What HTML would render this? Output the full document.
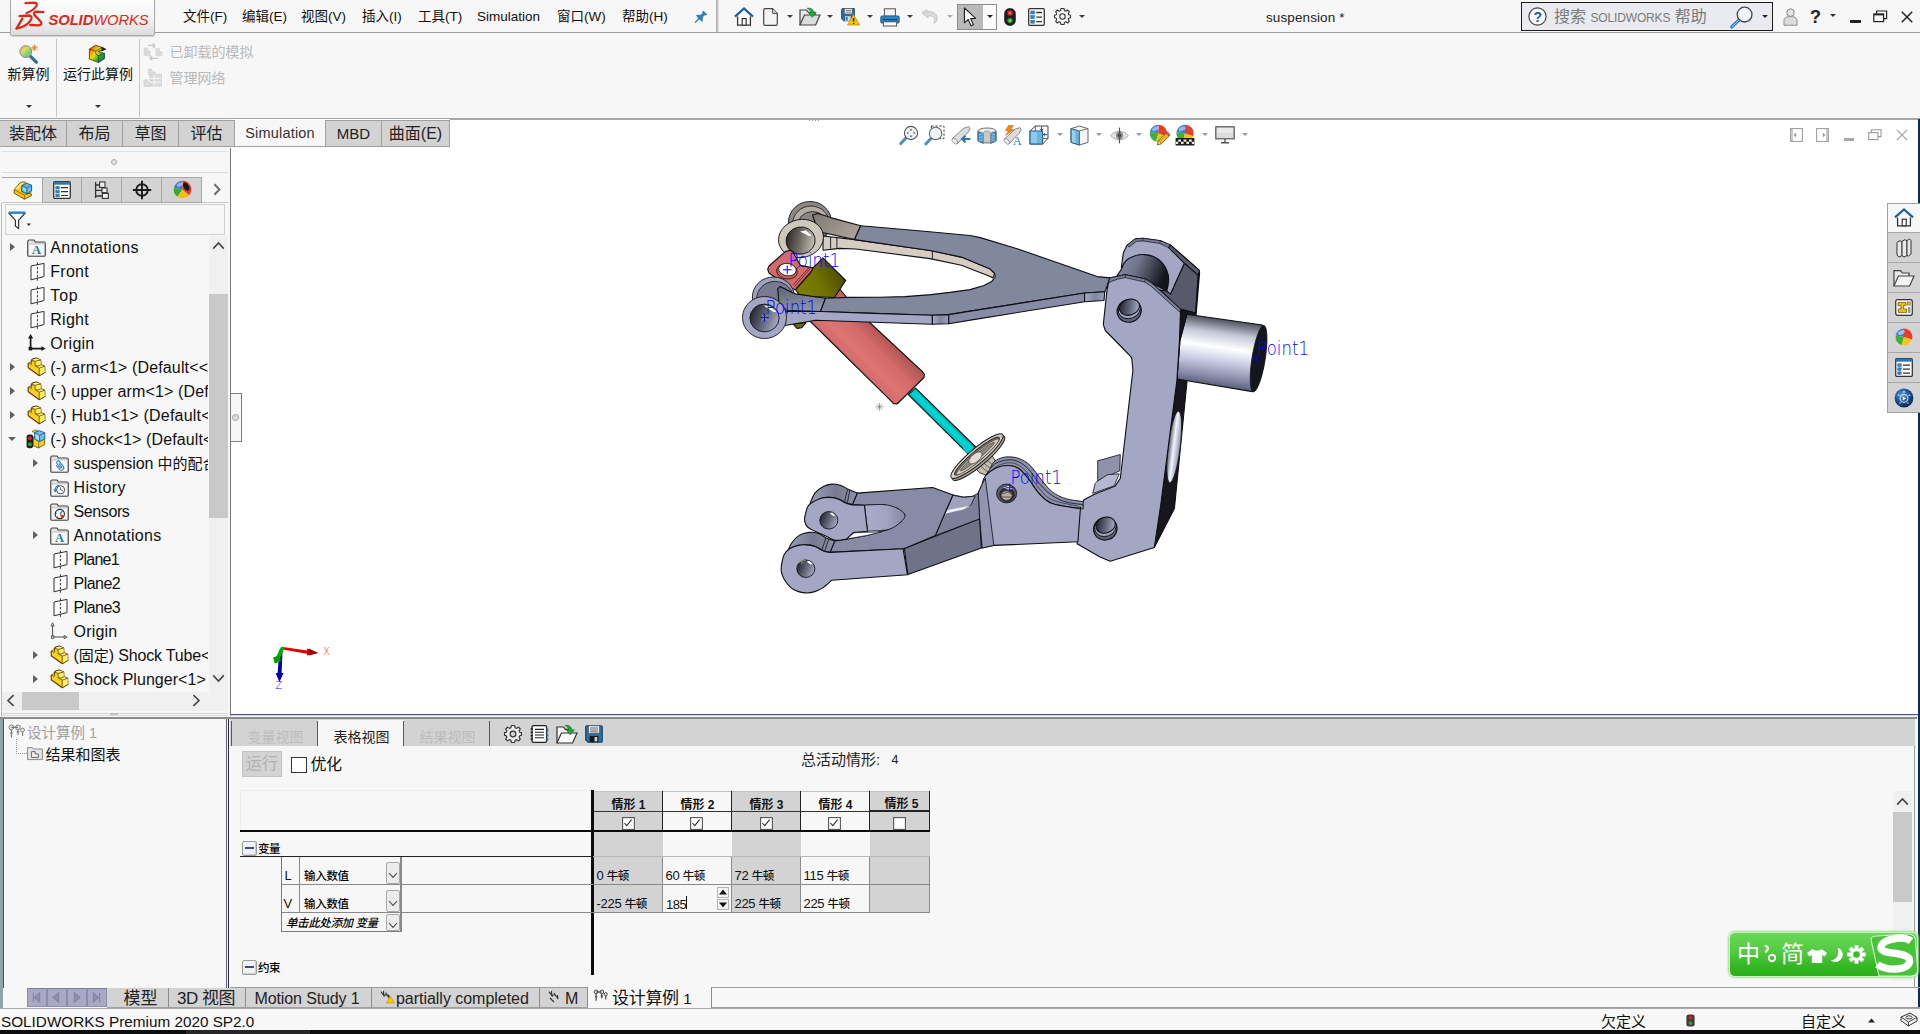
<!DOCTYPE html>
<html lang="zh-CN">
<head>
<meta charset="utf-8">
<title>suspension * - SOLIDWORKS Premium 2020 SP2.0</title>
<style>
*{box-sizing:border-box;margin:0;padding:0}
html,body{width:1920px;height:1034px;overflow:hidden;background:#f7f7f7}
body{font-family:"Liberation Sans","Noto Sans CJK SC",sans-serif;color:#1a1a1a;font-size:13px}
#root{position:relative;width:1920px;height:1034px;overflow:hidden;background:#f7f7f7}
.a{position:absolute;white-space:nowrap}
.t{position:absolute;white-space:nowrap;line-height:1}
.hl{position:absolute;height:1px;background:#a0a0a0}
.vl{position:absolute;width:1px;background:#a0a0a0}
svg{position:absolute;overflow:visible}
/* menu */
.menu{font-size:13.5px;top:10px;color:#111}
/* cmd tabs */
.ctab{z-index:2;position:absolute;top:120px;height:27px;background:#d3d3d3;border:1px solid #a0a0a0;border-left:none;font-size:16px;line-height:25px;text-align:center;color:#222}
.ctab.act{background:#f7f7f7;border-bottom-color:#f7f7f7;border-top-color:#f7f7f7;color:#333}
/* tree */
.tr{position:absolute;font-size:16px;line-height:24px;height:24px;white-space:nowrap;color:#111}
.arr{position:absolute;width:0;height:0;border-left:5px solid #606060;border-top:4px solid transparent;border-bottom:4px solid transparent}
.arrd{position:absolute;width:0;height:0;border-top:3.5px solid #3c3c3c;border-left:3px solid transparent;border-right:3px solid transparent;margin-left:1.5px;margin-top:1px}
</style>
</head>
<body>
<div id="root">
<!--TOP-->
<!-- ===== title / menu bar ===== -->
<div class="hl" style="left:0;top:32px;width:1920px;background:#9a9a9a"></div>
<div class="a" style="left:10px;top:-2px;width:145px;height:38px;border:1px solid #a8a8a8;border-radius:2px;background:linear-gradient(180deg,#fdfdfd 0%,#f4f4f4 55%,#dcdcdc 100%);box-shadow:0 1px 1px rgba(0,0,0,.15)"></div>
<svg style="left:10px;top:0" width="40" height="36" viewBox="0 0 40 36"><g fill="none" stroke="#da291c" stroke-width="2.3" stroke-linecap="round" stroke-linejoin="round"><path d="M15.6 3.2 L24.4 2.6 Q27.8 3 26.4 6 Q23.6 10.4 16.6 13"/><path d="M9.6 16.1 L18.8 15.5 Q22.6 15.8 21.2 19.2 Q17.6 26.4 6.4 28.6 L12.4 18.6"/><path d="M33.4 12.1 L27 11.6 Q23 11.8 24.2 14.6 L31 22 Q32.4 25.2 28.6 25.3 L20.2 25"/></g></svg>
<div class="t" style="left:48.5px;top:12.6px;font-size:14.8px;font-weight:bold;font-style:italic;color:#da291c;letter-spacing:-.1px">SOLID<span style="font-weight:normal;letter-spacing:-.15px">WORKS</span></div>
<div class="t menu" style="left:183px">文件(F)</div>
<div class="t menu" style="left:242px">编辑(E)</div>
<div class="t menu" style="left:301px">视图(V)</div>
<div class="t menu" style="left:362px">插入(I)</div>
<div class="t menu" style="left:418px">工具(T)</div>
<div class="t menu" style="left:477px">Simulation</div>
<div class="t menu" style="left:557px">窗口(W)</div>
<div class="t menu" style="left:622px">帮助(H)</div>
<svg style="left:685px;top:4px" width="30" height="26" viewBox="0 0 30 26"><path d="M17.6 7 L18.4 6.8 L22 10.2 L21.8 11 L19.4 11.4 L18 13 L17.6 17.8 L17 18 L15.4 16.2 L14 15.6 L10.6 19 L9.8 18.6 L10 17.6 L13.2 14.4 L12.6 13.4 L11 11.6 L11.2 11 L15.8 10.8 L17.2 9.4 Z" fill="#2f86b2"/></svg>
<div class="vl" style="left:716px;top:0;height:32px;background:linear-gradient(90deg,#a4a4a4,#c8c8c8 50%,#e4e4e4);width:3px"></div>
<!-- quick toolbar -->
<svg style="left:734px;top:7px" width="20" height="20" viewBox="0 0 20 20"><path d="M1 9.6 L10 1.4 L19 9.6" fill="none" stroke="#1f5f94" stroke-width="2.2"/><path d="M3.6 9.5 V18.2 H16.4 V9.5" fill="#fff" stroke="#333" stroke-width="1.3"/><rect x="8.2" y="11.6" width="4" height="6.6" fill="#fff" stroke="#333" stroke-width="1.2"/></svg>
<svg style="left:763px;top:8px" width="15" height="18" viewBox="0 0 15 18"><path d="M0.7 2 Q0.7 0.7 2 0.7 H9.6 L14.3 5.4 V16 Q14.3 17.3 13 17.3 H2 Q0.7 17.3 0.7 16 Z" fill="#f4f4f4" stroke="#444" stroke-width="1.2"/><path d="M9.6 0.7 V5.4 H14.3" fill="#ddd" stroke="#444" stroke-width="1"/></svg>
<div class="arrd" style="left:785.5px;top:14px"></div>
<svg style="left:799px;top:7px" width="22" height="19" viewBox="0 0 22 19"><path d="M1 18 V3 H7.6 L9.4 5.4 H16 V8" fill="#e9e9e9" stroke="#444" stroke-width="1.2"/><path d="M1 18 L5.4 8 H21 L16.6 18 Z" fill="#dcdcdc" stroke="#444" stroke-width="1.2"/><path d="M8 1.2 C12 0.6 14.6 2.6 14.8 5.6 L17.4 5.6 L13.2 10.4 L9.2 5.6 L11.8 5.6 C11.6 3.8 10.4 2.4 8 1.2 Z" fill="#1fa83a" stroke="#0e7a22" stroke-width=".5"/></svg>
<div class="arrd" style="left:825.5px;top:14px"></div>
<svg style="left:841px;top:8px" width="19" height="18" viewBox="0 0 19 18"><path d="M0.6 1.8 Q0.6 0.6 1.8 0.6 H13.4 V12.8 H2.6 L0.6 10.8 Z" fill="#2a6ea6" stroke="#1d4f7a" stroke-width="1"/><rect x="3.4" y="0.6" width="7.8" height="5.4" fill="#e8e8e8" stroke="#555" stroke-width=".6"/><path d="M5 2.4 H10 M5 4.2 H10" stroke="#666" stroke-width=".8"/><rect x="4" y="8.2" width="5.6" height="4.6" fill="#d8d8d8"/><rect x="4.8" y="9" width="1.8" height="3.2" fill="#2a6ea6"/><path d="M12.6 6.6 L18.6 17 H6.6 Z" fill="#f8c800" stroke="#c98a00" stroke-width=".8"/><path d="M12.6 10 V13.6 M12.6 14.8 V16" stroke="#222" stroke-width="1.5"/></svg>
<div class="arrd" style="left:865.5px;top:14px"></div>
<svg style="left:880px;top:8px" width="20" height="19" viewBox="0 0 20 19"><rect x="4.4" y="0.8" width="11" height="7.4" fill="#f2f2f2" stroke="#555" stroke-width="1"/><rect x="0.8" y="8" width="18.4" height="7" rx="1.2" fill="#2d87c6" stroke="#1c5f92" stroke-width="1"/><path d="M2.6 11.6 H17.4" stroke="#0e4a78" stroke-width="1.4"/><rect x="3.4" y="13.8" width="13.2" height="4.2" fill="#fafafa" stroke="#555" stroke-width="1"/></svg>
<div class="arrd" style="left:905px;top:14px"></div>
<svg style="left:921px;top:9px" width="18" height="15" viewBox="0 0 18 15"><path d="M1 3.8 L5.6 0.8 L6 2.8 C11.4 1.6 16.4 4.6 16.2 9.6 C16.1 12 15 13.6 12.6 14.4 C14.2 12.6 14.2 10.2 12.8 8.6 C11.4 7 9 6.4 6.8 7 L7.2 9 Z" fill="#d9d9d9" stroke="#bdbdbd" stroke-width=".8"/></svg>
<div class="arrd" style="left:945px;top:14px;border-top-color:#b0b0b0"></div>
<div class="a" style="left:957px;top:4px;width:40px;height:26px;border:1px solid #8c8c8c;background:#fbfbfb"></div>
<div class="a" style="left:958px;top:5px;width:25px;height:24px;background:#b9b9b9"></div>
<svg style="left:963px;top:7px" width="15" height="20" viewBox="0 0 15 20"><path d="M1.4 0.8 L1.4 15.8 L5.2 12.4 L8 18.8 L10.4 17.8 L7.6 11.6 L12.6 11.4 Z" fill="#fff" stroke="#222" stroke-width="1.1" stroke-linejoin="round"/></svg>
<div class="arrd" style="left:985.5px;top:14px;border-top-color:#222"></div>
<svg style="left:1004px;top:8px" width="12" height="18" viewBox="0 0 12 18"><rect x="0.6" y="0.6" width="10.8" height="16.8" rx="5" fill="#1e1e1e" stroke="#000" stroke-width=".6"/><circle cx="6" cy="5" r="2.7" fill="#e0201a"/><circle cx="6" cy="12.6" r="2.7" fill="#1fa02c"/><path d="M4.6 5 H7.4 M6 3.6 V6.4" stroke="#ff9a90" stroke-width=".7"/><path d="M4.6 12.6 H7.4 M6 11.2 V14" stroke="#9af09a" stroke-width=".7"/></svg>
<svg style="left:1028px;top:8px" width="17" height="18" viewBox="0 0 17 18"><rect x="0.7" y="0.7" width="15.6" height="16.6" rx="1" fill="#fdfdfd" stroke="#333" stroke-width="1.3"/><rect x="2.8" y="3" width="3.6" height="3" fill="#2d87c6" stroke="#1c5f92" stroke-width=".5"/><rect x="2.8" y="7.6" width="3.6" height="3" fill="#2d87c6" stroke="#1c5f92" stroke-width=".5"/><rect x="2.8" y="12.2" width="3.6" height="3" fill="#2d87c6" stroke="#1c5f92" stroke-width=".5"/><path d="M8.2 4.5 H14 M8.2 9.1 H14 M8.2 13.7 H14" stroke="#333" stroke-width="1.3"/></svg>
<svg style="left:1054px;top:8px" width="17" height="17" viewBox="0 0 17 17"><g transform="translate(8.5 8.5)"><path id="gear" d="M-1.5 -8 H1.5 L2 -5.9 L3.4 -5.3 L5.2 -6.5 L6.9 -4.7 L5.8 -3 L6.3 -1.7 L8 -1.3 V1.3 L6.3 1.7 L5.8 3 L6.9 4.7 L5.2 6.5 L3.4 5.3 L2 5.9 L1.5 8 H-1.5 L-2 5.9 L-3.4 5.3 L-5.2 6.5 L-6.9 4.7 L-5.8 3 L-6.3 1.7 L-8 1.3 V-1.3 L-6.3 -1.7 L-5.8 -3 L-6.9 -4.7 L-5.2 -6.5 L-3.4 -5.3 L-2 -5.9 Z" fill="#f7f7f7" stroke="#333" stroke-width="1.1" stroke-linejoin="round"/><circle r="2.7" fill="#f7f7f7" stroke="#333" stroke-width="1.1"/></g></svg>
<div class="arrd" style="left:1077.5px;top:14px"></div>
<div class="t" style="left:1266px;top:10.5px;font-size:13.5px;color:#222;letter-spacing:.1px">suspension *</div>
<!-- search box -->
<div class="a" style="left:1521px;top:2px;width:252px;height:29px;border:1.5px solid #1c1c1c;background:#e9ebf1"></div>
<svg style="left:1528px;top:7px" width="19" height="19" viewBox="0 0 19 19"><circle cx="9.5" cy="9.5" r="8.6" fill="#fafafa" stroke="#444" stroke-width="1.2"/></svg>
<div class="t" style="left:1533.5px;top:9.5px;font-size:14px;font-weight:bold;color:#1b5d94">?</div>
<div class="t" style="left:1554px;top:9px;font-size:16px;color:#7a7a7a">搜索 <span style="font-size:12px;letter-spacing:-.15px">SOLIDWORKS</span> 帮助</div>
<svg style="left:1730px;top:6px" width="24" height="23" viewBox="0 0 24 23"><path d="M9.6 13.4 L1.6 21" stroke="#2f7fb8" stroke-width="3.2" stroke-linecap="round"/><path d="M9.6 13.4 L1.6 21" stroke="#9fd0f0" stroke-width="1" stroke-linecap="round"/><circle cx="14.6" cy="8.6" r="7.4" fill="#f1f3f8" stroke="#444" stroke-width="1.3"/></svg>
<div class="arrd" style="left:1760px;top:14px;border-top-color:#222"></div>
<svg style="left:1783px;top:8px" width="15" height="18" viewBox="0 0 15 18"><circle cx="7.5" cy="4.6" r="3.8" fill="#e4e4e4" stroke="#8a8a8a" stroke-width="1"/><path d="M1 17.2 V12.6 C1 9.6 3.6 8.6 7.5 8.6 C11.4 8.6 14 9.6 14 12.6 V17.2 Z" fill="#dcdcdc" stroke="#8a8a8a" stroke-width="1"/></svg>
<div class="t" style="left:1810px;top:7.5px;font-size:18px;font-weight:bold;color:#222">?</div>
<div class="arrd" style="left:1830px;top:13.5px;margin:0;border-top-color:#333"></div>
<div class="a" style="left:1850px;top:19.5px;width:11px;height:3.5px;background:#222"></div>
<svg style="left:1873px;top:10px" width="15" height="13" viewBox="0 0 15 13"><path d="M3.6 3.6 V1 H13.6 V8.6 H10.6" fill="none" stroke="#222" stroke-width="1.2"/><rect x="0.8" y="4" width="9.8" height="7.6" fill="#f7f7f7" stroke="#222" stroke-width="1.2"/><path d="M0.8 4.6 H10.6" stroke="#222" stroke-width="1.6"/></svg>
<svg style="left:1901px;top:11px" width="12" height="12" viewBox="0 0 12 12"><path d="M0.8 0.8 L11.2 11.2 M11.2 0.8 L0.8 11.2" stroke="#222" stroke-width="1.5"/></svg>
<!--CMD-->
<!-- ===== command manager ===== -->
<svg style="left:19px;top:44px" width="20" height="20" viewBox="0 0 20 20"><defs><linearGradient id="rb1" x1="0" y1="0" x2="1" y2="1"><stop offset="0" stop-color="#f08a7a"/><stop offset=".35" stop-color="#e8d860"/><stop offset=".65" stop-color="#7fd070"/><stop offset="1" stop-color="#70a8e0"/></linearGradient></defs><path d="M10.2 11.2 L17.4 18.2" stroke="#2f6f96" stroke-width="3.2" stroke-linecap="round"/><circle cx="6.8" cy="7.6" r="5.9" fill="url(#rb1)" stroke="#8a8a8a" stroke-width="1"/><path d="M15.4 0.6 V7 M12.2 3.8 H18.6 M13.1 1.5 L17.7 6.1 M17.7 1.5 L13.1 6.1" stroke="#e07a10" stroke-width=".9"/></svg>
<div class="t" style="left:7.5px;top:67px;font-size:14px;color:#111">新算例</div>
<div class="arrd" style="left:24.5px;top:105px;margin:0 0 0 1px;border-top-color:#333"></div>
<div class="vl" style="left:56px;top:39px;height:78px;background:#c8c8c8"></div>
<svg style="left:88px;top:44px" width="20" height="20" viewBox="0 0 20 20"><defs><linearGradient id="rb2" x1="0" y1="0" x2="1" y2="1"><stop offset="0" stop-color="#e81c0c"/><stop offset=".28" stop-color="#f4a000"/><stop offset=".45" stop-color="#f0e000"/><stop offset=".68" stop-color="#18b030"/><stop offset="1" stop-color="#1038c8"/></linearGradient></defs><path d="M1.4 5 L7.6 1.2 L14 3.4 L14 6.4 L10 7.4 L16.6 9.4 L16.6 14.6 L10.6 18.6 L1.4 15 Z" fill="url(#rb2)" stroke="#333" stroke-width=".8" stroke-linejoin="round"/><path d="M1.4 5 L7.8 7.2 L7.8 10.4 L10.6 11.6 L10.6 18.6 M7.8 7.2 L14 3.4 M10.6 11.6 L16.6 9.4" fill="none" stroke="#333" stroke-width=".7"/><path d="M13.6 2.6 L18.6 5.2 L13.6 7.4 Z" fill="#222"/></svg>
<div class="t" style="left:63px;top:67px;font-size:14px;color:#111">运行此算例</div>
<div class="arrd" style="left:94px;top:105px;margin:0 0 0 1px;border-top-color:#333"></div>
<div class="vl" style="left:139px;top:39px;height:78px;background:#c8c8c8"></div>
<svg style="left:143px;top:42px" width="20" height="20" viewBox="0 0 20 20"><g fill="#dcdcdc" stroke="#d0d0d0" stroke-width=".6"><path d="M1 6 H4.6 V9 H7 V13.6 H1 Z"/><path d="M13 6.4 H16.4 V9.6 H19 V13.6 H13 Z"/></g><path d="M5 3.4 H11.4 M9.6 1.4 L11.8 3.4 L9.6 5.4 M15 16.4 H7.4 M9.2 14.4 L7 16.4 L9.2 18.4" fill="none" stroke="#c8c8c8" stroke-width="1.1"/><path d="M11.4 3.4 V6.6 M7.4 16.4 V13" stroke="#c8c8c8" stroke-width="1.1" fill="none"/></svg>
<div class="t" style="left:169.5px;top:45px;font-size:14px;color:#b9b9b9">已卸载的模拟</div>
<svg style="left:143px;top:68px" width="20" height="20" viewBox="0 0 20 20"><g fill="#dedede" stroke="#cdcdcd" stroke-width=".8"><path d="M5.6 1 H8.6 V4 H12 V7 H5.6 Z"/><rect x="7" y="6.6" width="11.4" height="11.4"/><path d="M1 12 H4.6 V14.6 H7 V18.4 H1 Z"/></g><path d="M7 10.4 H18.4 M7 14.2 H18.4 M11 6.6 V18" stroke="#f3f3f3" stroke-width="1"/><path d="M9 8.6 V9.4 M9 12 V12.8 M9 15.8 V16.6" stroke="#aaa" stroke-width="1"/></svg>
<div class="t" style="left:169.5px;top:71px;font-size:14px;color:#b9b9b9">管理网络</div>
<div class="hl" style="left:0;top:118px;width:1920px;background:#a6a6a6"></div>
<!-- command tabs -->
<div class="ctab" style="left:0;width:67px">装配体</div>
<div class="ctab" style="left:67px;width:56px">布局</div>
<div class="ctab" style="left:123px;width:56px">草图</div>
<div class="ctab" style="left:179px;width:56px">评估</div>
<div class="ctab act" style="left:235px;width:90px;font-size:14.5px;letter-spacing:.2px;border-right:none;border-bottom-color:#a0a0a0">Simulation</div>
<div class="ctab" style="left:325px;width:57px;font-size:15px;border-left:1px solid #a0a0a0">MBD</div>
<div class="ctab" style="left:382px;width:68px">曲面(E)</div>
<!--LEFT-->
<!-- ===== feature manager ===== -->
<div class="vl" style="left:1px;top:203px;height:513px;background:#b8b8b8;width:1px"></div>
<div class="hl" style="left:2px;top:151px;width:226px;background:#d9e3ea"></div>
<div class="hl" style="left:2px;top:172px;width:226px;background:#dcdcdc"></div>
<div class="a" style="left:111px;top:159px;width:6px;height:6px;border-radius:50%;border:1px solid #a8a8a8;background:#e4e4e4"></div>
<div class="hl" style="left:2px;top:202px;width:226px;background:#c8c8c8"></div>
<div class="hl" style="left:2px;top:177px;width:40px;background:#a6a6a6"></div>
<div class="a" style="left:42px;top:177px;width:40px;height:26px;background:#d3d3d3;border:1px solid #a6a6a6;border-left:1px solid #a6a6a6"></div>
<div class="a" style="left:82px;top:177px;width:40px;height:26px;background:#d3d3d3;border:1px solid #a6a6a6;border-left:none"></div>
<div class="a" style="left:122px;top:177px;width:40px;height:26px;background:#d3d3d3;border:1px solid #a6a6a6;border-left:none"></div>
<div class="a" style="left:162px;top:177px;width:40px;height:26px;background:#d3d3d3;border:1px solid #a6a6a6;border-left:none"></div>
<svg style="left:13px;top:180px" width="20" height="20" viewBox="0 0 20 20"><path d="M1.2 9.6 L7.4 2.4 L11.6 1.8 L12.8 3.2 L9 7.2 L9 11.6 L18.4 14 L18.4 15.6 L11.4 19.2 L1.2 13.2 Z" fill="#f3c61d" stroke="#7a5c00" stroke-width="1" stroke-linejoin="round"/><path d="M1.8 9.6 L7.6 3 L11.2 2.4 L5.6 9 Z" fill="#fbe27a"/><path d="M1.2 9.6 L11.4 15.2 L11.4 19.2 M11.4 15.2 L18.4 12.4" fill="none" stroke="#7a5c00" stroke-width=".8"/><path d="M8.8 5.6 L13.6 3.2 L18.6 5.2 L18.6 11 L13.8 13.8 L8.8 11.2 Z" fill="#63b8e4" stroke="#1d5f8a" stroke-width="1" stroke-linejoin="round"/><path d="M8.8 5.6 L13.8 7.8 L18.6 5.2 M13.8 7.8 V13.8" fill="none" stroke="#1d5f8a" stroke-width=".8"/><path d="M9.6 6.8 L13 8.4 V12.4 L9.6 10.6 Z" fill="#a8daf4" opacity=".8"/></svg>
<svg style="left:53px;top:181px" width="18" height="18" viewBox="0 0 18 18"><rect x=".7" y=".7" width="16.6" height="16.6" rx="1" fill="#fdfdfd" stroke="#333" stroke-width="1.3"/><rect x=".7" y=".7" width="16.6" height="3" fill="#2d78b0"/><rect x="2.8" y="5.4" width="3.4" height="2.6" fill="#2d87c6" stroke="#1c5f92" stroke-width=".5"/><rect x="2.8" y="9.4" width="3.4" height="2.6" fill="#2d87c6" stroke="#1c5f92" stroke-width=".5"/><rect x="2.8" y="13.2" width="3.4" height="2.6" fill="#2d87c6" stroke="#1c5f92" stroke-width=".5"/><path d="M8 6.7 H15 M8 10.7 H15 M8 14.5 H15" stroke="#333" stroke-width="1.2"/></svg>
<svg style="left:94px;top:181px" width="16" height="18" viewBox="0 0 16 18"><path d="M1.6 1 V17 M1.6 4 H6 M1.6 9.4 H8 M1.6 15 H8" fill="none" stroke="#333" stroke-width="1.3"/><rect x="5.6" y="1" width="5.4" height="5.4" fill="#f0f0f0" stroke="#333" stroke-width="1.1"/><rect x="8" y="7" width="5" height="4.6" fill="#f0f0f0" stroke="#333" stroke-width="1.1"/><rect x="8.4" y="12.4" width="6" height="5" fill="#f0f0f0" stroke="#333" stroke-width="1.1"/></svg>
<svg style="left:132px;top:180px" width="20" height="20" viewBox="0 0 20 20"><circle cx="10" cy="10" r="5.8" fill="none" stroke="#1a1a1a" stroke-width="1.9"/><path d="M10 .8 V19.2 M.8 10 H19.2" stroke="#1a1a1a" stroke-width="1.9"/></svg>
<svg style="left:173px;top:180px" width="19" height="19" viewBox="0 0 19 19"><circle cx="9.5" cy="9.5" r="8.8" fill="#e8e8e8"/><path d="M9.5 9.5 L9.5 .7 A8.8 8.8 0 0 0 .9 7.6 Z" fill="#3a78d0"/><path d="M9.5 9.5 L.9 7.6 A8.8 8.8 0 0 0 4.4 16.7 Z" fill="#3aa836"/><path d="M9.5 9.5 L4.4 16.7 A8.8 8.8 0 0 0 16.2 15.2 Z" fill="#f0c010"/><path d="M9.5 9.5 L16.2 15.2 A8.8 8.8 0 0 0 9.5 .7 Z" fill="#e03a20"/><ellipse cx="13.2" cy="6.6" rx="2.6" ry="4.4" transform="rotate(-32 13.2 6.6)" fill="#1a1a1a"/><ellipse cx="7" cy="4.6" rx="3.4" ry="1.8" transform="rotate(-25 7 4.6)" fill="#fff" opacity=".45"/></svg>
<svg style="left:213px;top:183px" width="8" height="13" viewBox="0 0 8 13"><path d="M1.4 1.2 L6.4 6.5 L1.4 11.8" fill="none" stroke="#6e6e6e" stroke-width="2"/></svg>
<div class="a" style="left:5px;top:204px;width:220px;height:31px;border:1px solid #d0d0d0;background:#f7f7f7"></div>
<svg style="left:8px;top:211px" width="24" height="19" viewBox="0 0 24 19"><path d="M.8 2 H17.2 L10.6 9.4 V17.6 L7.4 15 V9.4 Z" fill="#fdfdfd" stroke="#333" stroke-width="1.2" stroke-linejoin="round"/><path d="M.8 1.6 H17.2" stroke="#2d87c6" stroke-width="2.4"/><path d="M18.6 12.4 H23 L20.8 15 Z" fill="#333"/></svg>
<div class="a" style="left:2px;top:236px;width:206px;height:456px;overflow:hidden">
<div class="arr" style="left:8px;top:6.9px"></div>
<svg style="left:25px;top:2.8px" width="19" height="18" viewBox="0 0 19 18"><path d="M.7 16 V2.6 Q.7 1 2.2 1 H6.4 Q7.4 1 7.8 2 L8.2 3 H16.8 Q18.3 3 18.3 4.6 V16 Q18.3 17.3 17 17.3 H2 Q.7 17.3 .7 16 Z" fill="#e2e2e2" stroke="#444" stroke-width="1.1"/><rect x="1.6" y="5" width="15.8" height="11.4" rx=".8" fill="#f8f8f8" stroke="#9a9a9a" stroke-width=".5"/><text x="9.6" y="15.4" text-anchor="middle" font-family="Liberation Serif,serif" font-weight="bold" font-size="12.5" fill="#2a7a9c">A</text></svg>
<div class="tr" style="left:48.3px;top:-0.2px;letter-spacing:0.38px">Annotations</div>
<svg style="left:27.5px;top:25.8px" width="15" height="19" viewBox="0 0 15 19"><path d="M1 4 L14 1.4 V14.6 L1 17.8 Z" fill="#fbfbfb" stroke="#333" stroke-width="1"/><path d="M7.4 .4 V3.2 M7.4 5 V7.4 M7.4 9 V11.4 M7.4 13 V15.4 M7.4 16.6 V18.8" stroke="#333" stroke-width="1"/></svg>
<div class="tr" style="left:48.3px;top:23.8px;letter-spacing:0.27px">Front</div>
<svg style="left:27.5px;top:49.8px" width="15" height="19" viewBox="0 0 15 19"><path d="M1 4 L14 1.4 V14.6 L1 17.8 Z" fill="#fbfbfb" stroke="#333" stroke-width="1"/><path d="M7.4 .4 V3.2 M7.4 5 V7.4 M7.4 9 V11.4 M7.4 13 V15.4 M7.4 16.6 V18.8" stroke="#333" stroke-width="1"/></svg>
<div class="tr" style="left:48.3px;top:47.8px;letter-spacing:0.83px">Top</div>
<svg style="left:27.5px;top:73.8px" width="15" height="19" viewBox="0 0 15 19"><path d="M1 4 L14 1.4 V14.6 L1 17.8 Z" fill="#fbfbfb" stroke="#333" stroke-width="1"/><path d="M7.4 .4 V3.2 M7.4 5 V7.4 M7.4 9 V11.4 M7.4 13 V15.4 M7.4 16.6 V18.8" stroke="#333" stroke-width="1"/></svg>
<div class="tr" style="left:48.3px;top:71.8px;letter-spacing:0.27px">Right</div>
<svg style="left:25px;top:98.4px" width="19" height="18" viewBox="0 0 19 18"><path d="M3.6 3 V14.6 H15" fill="none" stroke="#1a1a1a" stroke-width="1.7"/><path d="M3.6 0 L1 4.4 H6.2 Z M18.6 14.6 L14.4 12.2 V17 Z" fill="#1a1a1a"/><rect x="1.6" y="12.8" width="3.6" height="3.6" fill="#1a1a1a"/></svg>
<div class="tr" style="left:48.3px;top:95.8px;letter-spacing:0.25px">Origin</div>
<div class="arr" style="left:8px;top:126.9px"></div>
<svg style="left:22px;top:120px" width="24" height="22" viewBox="0 0 24 22"><path d="M4.2 7.2 L7.2 6 L7.4 4.2 L8.6 3 L12.3 2.1 L16.7 3.9 L16.9 8.8 L20.7 10.2 L20.9 16.3 L15.3 19.7 L4.2 11.8 Z" fill="#f8d020" stroke="#5a3c00" stroke-width="1.1" stroke-linejoin="round"/><path d="M11.1 5.3 L16.7 4.2 L16.8 8.8 L13.9 10 L11.1 9.8 Z M15.3 12.1 L20.7 10.4 L20.8 16 L15.4 19.3 Z" fill="#fff06a"/><path d="M8.1 3.9 L12.3 2.4 L16.5 3.9 L11.1 5.3 Z M13.9 10 L16.9 8.9 L20.4 10.3 L15.3 12.1 Z M4.6 7.3 L7.2 6.3 L7.5 8.2 Z" fill="#fff6a0"/><path d="M7.4 8.4 L7.9 4.4 L11.1 5.3 L11.1 9.8 L15.2 12.1 L15.3 19.5 M11.1 5.3 L16.6 4 M11.1 9.8 L13.9 10 L16.9 8.9 M15.2 12.1 L20.6 10.3 M4.3 7.3 L7.4 8.4" fill="none" stroke="#6a4800" stroke-width=".8"/></svg>
<div class="tr" style="left:48.3px;top:119.8px;letter-spacing:0.15px">(-) arm&lt;1&gt; (Default&lt;&lt;Default&gt;_Display State 1&gt;)</div>
<div class="arr" style="left:8px;top:150.9px"></div>
<svg style="left:22px;top:144px" width="24" height="22" viewBox="0 0 24 22"><path d="M4.2 7.2 L7.2 6 L7.4 4.2 L8.6 3 L12.3 2.1 L16.7 3.9 L16.9 8.8 L20.7 10.2 L20.9 16.3 L15.3 19.7 L4.2 11.8 Z" fill="#f8d020" stroke="#5a3c00" stroke-width="1.1" stroke-linejoin="round"/><path d="M11.1 5.3 L16.7 4.2 L16.8 8.8 L13.9 10 L11.1 9.8 Z M15.3 12.1 L20.7 10.4 L20.8 16 L15.4 19.3 Z" fill="#fff06a"/><path d="M8.1 3.9 L12.3 2.4 L16.5 3.9 L11.1 5.3 Z M13.9 10 L16.9 8.9 L20.4 10.3 L15.3 12.1 Z M4.6 7.3 L7.2 6.3 L7.5 8.2 Z" fill="#fff6a0"/><path d="M7.4 8.4 L7.9 4.4 L11.1 5.3 L11.1 9.8 L15.2 12.1 L15.3 19.5 M11.1 5.3 L16.6 4 M11.1 9.8 L13.9 10 L16.9 8.9 M15.2 12.1 L20.6 10.3 M4.3 7.3 L7.4 8.4" fill="none" stroke="#6a4800" stroke-width=".8"/></svg>
<div class="tr" style="left:48.3px;top:143.8px;letter-spacing:0.14px">(-) upper arm&lt;1&gt; (Default&lt;&lt;Default&gt;_Display State 1&gt;)</div>
<div class="arr" style="left:8px;top:174.9px"></div>
<svg style="left:22px;top:168px" width="24" height="22" viewBox="0 0 24 22"><path d="M4.2 7.2 L7.2 6 L7.4 4.2 L8.6 3 L12.3 2.1 L16.7 3.9 L16.9 8.8 L20.7 10.2 L20.9 16.3 L15.3 19.7 L4.2 11.8 Z" fill="#f8d020" stroke="#5a3c00" stroke-width="1.1" stroke-linejoin="round"/><path d="M11.1 5.3 L16.7 4.2 L16.8 8.8 L13.9 10 L11.1 9.8 Z M15.3 12.1 L20.7 10.4 L20.8 16 L15.4 19.3 Z" fill="#fff06a"/><path d="M8.1 3.9 L12.3 2.4 L16.5 3.9 L11.1 5.3 Z M13.9 10 L16.9 8.9 L20.4 10.3 L15.3 12.1 Z M4.6 7.3 L7.2 6.3 L7.5 8.2 Z" fill="#fff6a0"/><path d="M7.4 8.4 L7.9 4.4 L11.1 5.3 L11.1 9.8 L15.2 12.1 L15.3 19.5 M11.1 5.3 L16.6 4 M11.1 9.8 L13.9 10 L16.9 8.9 M15.2 12.1 L20.6 10.3 M4.3 7.3 L7.4 8.4" fill="none" stroke="#6a4800" stroke-width=".8"/></svg>
<div class="tr" style="left:48.3px;top:167.8px;letter-spacing:0.21px">(-) Hub1&lt;1&gt; (Default&lt;&lt;Default&gt;_Display State 1&gt;)</div>
<div class="arrd" style="left:6px;top:201.4px;border-top:4.5px solid #606060;border-left-width:4px;border-right-width:4px;margin:0"></div>
<svg style="left:24.4px;top:193.4px" width="20" height="20" viewBox="0 0 20 20"><path d="M7 8.4 L11 6.6 L18.6 9 V15.4 L12.6 19 L7 16.6 Z" fill="#f5cc24" stroke="#7a5c00" stroke-width=".9" stroke-linejoin="round"/><path d="M12.6 12.4 V19 M12.6 12.4 L18.6 9.6" stroke="#7a5c00" stroke-width=".7" fill="none"/><path d="M6 2.6 L9.6 .8 L12 1.8 L8.6 3.6 Z" fill="#f5cc24" stroke="#7a5c00" stroke-width=".7"/><path d="M8.6 3.8 L13.4 1.6 L18.8 3.8 V10 L13.6 12.6 L8.6 10.2 Z" fill="#6cc0ea" stroke="#1d5f8a" stroke-width=".9" stroke-linejoin="round"/><path d="M8.6 3.8 L13.6 6.2 L18.8 3.8 M13.6 6.2 V12.6" fill="none" stroke="#1d5f8a" stroke-width=".8"/><path d="M9.4 4.8 L13 6.6 V11.4 L9.4 9.6 Z" fill="#b8e2f6" opacity=".7"/><rect x=".6" y="5.6" width="6.6" height="13.6" rx="2.6" fill="#1e1e1e"/><circle cx="3.9" cy="9.2" r="2" fill="#e0201a"/><circle cx="3.9" cy="15.2" r="2" fill="#2aa02c"/></svg>
<div class="tr" style="left:48.3px;top:191.8px;letter-spacing:0.12px">(-) shock&lt;1&gt; (Default&lt;Display State-1&gt;)</div>
<div class="arr" style="left:31px;top:222.9px"></div>
<svg style="left:48px;top:218.8px" width="19" height="18" viewBox="0 0 19 18"><path d="M.7 16 V2.6 Q.7 1 2.2 1 H6.4 Q7.4 1 7.8 2 L8.2 3 H16.8 Q18.3 3 18.3 4.6 V16 Q18.3 17.3 17 17.3 H2 Q.7 17.3 .7 16 Z" fill="#e2e2e2" stroke="#444" stroke-width="1.1"/><rect x="1.6" y="5" width="15.8" height="11.4" rx=".8" fill="#f8f8f8" stroke="#9a9a9a" stroke-width=".5"/><g transform="rotate(-38 9.6 10.6)" fill="none" stroke="#2a7fc0" stroke-width="1"><path d="M7.2 8.4 V13.4 A2.4 2.4 0 0 0 12 13.4 V7.4 A1.6 1.6 0 0 0 8.8 7.4 V12.8 A.8 .8 0 0 0 10.4 12.8 V8.4"/></g></svg>
<div class="tr" style="left:71.5px;top:215.8px;letter-spacing:-0.12px">suspension <span style="font-size:15px;letter-spacing:0">中的配合</span></div>
<svg style="left:48px;top:242.8px" width="19" height="18" viewBox="0 0 19 18"><path d="M.7 16 V2.6 Q.7 1 2.2 1 H6.4 Q7.4 1 7.8 2 L8.2 3 H16.8 Q18.3 3 18.3 4.6 V16 Q18.3 17.3 17 17.3 H2 Q.7 17.3 .7 16 Z" fill="#e2e2e2" stroke="#444" stroke-width="1.1"/><rect x="1.6" y="5" width="15.8" height="11.4" rx=".8" fill="#f8f8f8" stroke="#9a9a9a" stroke-width=".5"/><circle cx="10.6" cy="10.8" r="4" fill="#fff" stroke="#333" stroke-width=".9"/><path d="M10.6 8.4 V10.8 L12.8 11.6" fill="none" stroke="#333" stroke-width=".8"/><path d="M3.2 10.6 L5.2 13.4 L7.4 10.8 Z" fill="#2a7fc0"/><path d="M5.2 11.6 C5 8.6 7 6.6 9.4 6.4" fill="none" stroke="#2a7fc0" stroke-width="1.2"/></svg>
<div class="tr" style="left:71.5px;top:239.8px;letter-spacing:0.35px">History</div>
<svg style="left:48px;top:266.8px" width="19" height="18" viewBox="0 0 19 18"><path d="M.7 16 V2.6 Q.7 1 2.2 1 H6.4 Q7.4 1 7.8 2 L8.2 3 H16.8 Q18.3 3 18.3 4.6 V16 Q18.3 17.3 17 17.3 H2 Q.7 17.3 .7 16 Z" fill="#e2e2e2" stroke="#444" stroke-width="1.1"/><rect x="1.6" y="5" width="15.8" height="11.4" rx=".8" fill="#f8f8f8" stroke="#9a9a9a" stroke-width=".5"/><circle cx="9.8" cy="11" r="4.6" fill="#fff" stroke="#222" stroke-width="1.1"/><path d="M9.8 11 L14.2 12.4 A4.6 4.6 0 0 1 11.4 15.3 Z" fill="#e03a20"/><path d="M9.8 11 L12.6 7.8" stroke="#2a7fc0" stroke-width="1.2"/><path d="M6 10 L7 10.4 M7.4 7.6 L8 8.4 M7 13.6 L7.8 13" stroke="#222" stroke-width=".7"/></svg>
<div class="tr" style="left:71.5px;top:263.8px;letter-spacing:-0.39px">Sensors</div>
<div class="arr" style="left:31px;top:294.9px"></div>
<svg style="left:48px;top:290.8px" width="19" height="18" viewBox="0 0 19 18"><path d="M.7 16 V2.6 Q.7 1 2.2 1 H6.4 Q7.4 1 7.8 2 L8.2 3 H16.8 Q18.3 3 18.3 4.6 V16 Q18.3 17.3 17 17.3 H2 Q.7 17.3 .7 16 Z" fill="#e2e2e2" stroke="#444" stroke-width="1.1"/><rect x="1.6" y="5" width="15.8" height="11.4" rx=".8" fill="#f8f8f8" stroke="#9a9a9a" stroke-width=".5"/><text x="9.6" y="15.4" text-anchor="middle" font-family="Liberation Serif,serif" font-weight="bold" font-size="12.5" fill="#2a7a9c">A</text></svg>
<div class="tr" style="left:71.5px;top:287.8px;letter-spacing:0.32px">Annotations</div>
<svg style="left:50.5px;top:313.8px" width="15" height="19" viewBox="0 0 15 19"><path d="M1 4 L14 1.4 V14.6 L1 17.8 Z" fill="#fbfbfb" stroke="#333" stroke-width="1"/><path d="M7.4 .4 V3.2 M7.4 5 V7.4 M7.4 9 V11.4 M7.4 13 V15.4 M7.4 16.6 V18.8" stroke="#333" stroke-width="1"/></svg>
<div class="tr" style="left:71.5px;top:311.8px;letter-spacing:-0.75px">Plane1</div>
<svg style="left:50.5px;top:337.8px" width="15" height="19" viewBox="0 0 15 19"><path d="M1 4 L14 1.4 V14.6 L1 17.8 Z" fill="#fbfbfb" stroke="#333" stroke-width="1"/><path d="M7.4 .4 V3.2 M7.4 5 V7.4 M7.4 9 V11.4 M7.4 13 V15.4 M7.4 16.6 V18.8" stroke="#333" stroke-width="1"/></svg>
<div class="tr" style="left:71.5px;top:335.8px;letter-spacing:-0.52px">Plane2</div>
<svg style="left:50.5px;top:361.8px" width="15" height="19" viewBox="0 0 15 19"><path d="M1 4 L14 1.4 V14.6 L1 17.8 Z" fill="#fbfbfb" stroke="#333" stroke-width="1"/><path d="M7.4 .4 V3.2 M7.4 5 V7.4 M7.4 9 V11.4 M7.4 13 V15.4 M7.4 16.6 V18.8" stroke="#333" stroke-width="1"/></svg>
<div class="tr" style="left:71.5px;top:359.8px;letter-spacing:-0.52px">Plane3</div>
<svg style="left:47px;top:386.4px" width="19" height="18" viewBox="0 0 19 18"><path d="M3.6 3.6 V15 H15.4" fill="none" stroke="#333" stroke-width=".9"/><path d="M3.6 .8 L2 4 H5.2 Z M18.2 15 L15.2 13.4 V16.6 Z" stroke="#333" stroke-width=".8" fill="#f7f7f7"/><rect x="2.4" y="13.8" width="2.4" height="2.4" fill="#f7f7f7" stroke="#333" stroke-width=".8"/></svg>
<div class="tr" style="left:71.5px;top:383.8px;letter-spacing:0.19px">Origin</div>
<div class="arr" style="left:31px;top:414.9px"></div>
<svg style="left:45px;top:408px" width="24" height="22" viewBox="0 0 24 22"><path d="M4.2 7.2 L7.2 6 L7.4 4.2 L8.6 3 L12.3 2.1 L16.7 3.9 L16.9 8.8 L20.7 10.2 L20.9 16.3 L15.3 19.7 L4.2 11.8 Z" fill="#f8d020" stroke="#5a3c00" stroke-width="1.1" stroke-linejoin="round"/><path d="M11.1 5.3 L16.7 4.2 L16.8 8.8 L13.9 10 L11.1 9.8 Z M15.3 12.1 L20.7 10.4 L20.8 16 L15.4 19.3 Z" fill="#fff06a"/><path d="M8.1 3.9 L12.3 2.4 L16.5 3.9 L11.1 5.3 Z M13.9 10 L16.9 8.9 L20.4 10.3 L15.3 12.1 Z M4.6 7.3 L7.2 6.3 L7.5 8.2 Z" fill="#fff6a0"/><path d="M7.4 8.4 L7.9 4.4 L11.1 5.3 L11.1 9.8 L15.2 12.1 L15.3 19.5 M11.1 5.3 L16.6 4 M11.1 9.8 L13.9 10 L16.9 8.9 M15.2 12.1 L20.6 10.3 M4.3 7.3 L7.4 8.4" fill="none" stroke="#6a4800" stroke-width=".8"/></svg>
<div class="tr" style="left:71.5px;top:407.8px;letter-spacing:-0.16px">(<span style="font-size:15px;letter-spacing:0">固定</span>) Shock Tube&lt;1&gt; (Default&lt;&lt;Default&gt;_Display State 1&gt;)</div>
<div class="arr" style="left:31px;top:438.9px"></div>
<svg style="left:45px;top:432px" width="24" height="22" viewBox="0 0 24 22"><path d="M4.2 7.2 L7.2 6 L7.4 4.2 L8.6 3 L12.3 2.1 L16.7 3.9 L16.9 8.8 L20.7 10.2 L20.9 16.3 L15.3 19.7 L4.2 11.8 Z" fill="#f8d020" stroke="#5a3c00" stroke-width="1.1" stroke-linejoin="round"/><path d="M11.1 5.3 L16.7 4.2 L16.8 8.8 L13.9 10 L11.1 9.8 Z M15.3 12.1 L20.7 10.4 L20.8 16 L15.4 19.3 Z" fill="#fff06a"/><path d="M8.1 3.9 L12.3 2.4 L16.5 3.9 L11.1 5.3 Z M13.9 10 L16.9 8.9 L20.4 10.3 L15.3 12.1 Z M4.6 7.3 L7.2 6.3 L7.5 8.2 Z" fill="#fff6a0"/><path d="M7.4 8.4 L7.9 4.4 L11.1 5.3 L11.1 9.8 L15.2 12.1 L15.3 19.5 M11.1 5.3 L16.6 4 M11.1 9.8 L13.9 10 L16.9 8.9 M15.2 12.1 L20.6 10.3 M4.3 7.3 L7.4 8.4" fill="none" stroke="#6a4800" stroke-width=".8"/></svg>
<div class="tr" style="left:71.5px;top:431.8px;letter-spacing:0.04px">Shock Plunger&lt;1&gt; (Default&lt;&lt;Default&gt;_Display State 1&gt;)</div>
</div>
<div class="a" style="left:209px;top:236px;width:19px;height:456px;background:#f0f0f0"></div>
<div class="a" style="left:209px;top:294px;width:19px;height:224px;background:#c9c9c9"></div>
<svg style="left:212px;top:241px" width="13" height="9" viewBox="0 0 13 9"><path d="M1.2 7.6 L6.5 2 L11.8 7.6" fill="none" stroke="#444" stroke-width="1.6"/></svg>
<svg style="left:212px;top:674px" width="13" height="9" viewBox="0 0 13 9"><path d="M1.2 1.4 L6.5 7 L11.8 1.4" fill="none" stroke="#444" stroke-width="1.6"/></svg>
<div class="a" style="left:2px;top:692px;width:226px;height:19px;background:#f0f0f0"></div>
<div class="a" style="left:22px;top:692px;width:57px;height:18px;background:#c9c9c9"></div>
<svg style="left:6px;top:694px" width="9" height="13" viewBox="0 0 9 13"><path d="M7.6 1.2 L2 6.5 L7.6 11.8" fill="none" stroke="#444" stroke-width="1.6"/></svg>
<svg style="left:192px;top:694px" width="9" height="13" viewBox="0 0 9 13"><path d="M1.4 1.2 L7 6.5 L1.4 11.8" fill="none" stroke="#444" stroke-width="1.6"/></svg>
<div class="hl" style="left:2px;top:713px;width:226px;background:#d4d4d4"></div>
<div class="hl" style="left:2px;top:715px;width:226px;background:#dcdcdc"></div>
<div class="a" style="left:110px;top:713px;width:8px;height:2px;background:#c0c0c0"></div>
<!--VIEW-->
<!-- ===== graphics viewport ===== -->
<div class="a" style="left:231px;top:119px;width:1687px;height:595px;background:#fff"></div>
<div class="a" style="left:450px;top:119px;width:1470px;height:1px;background:#a6a6a6"></div>
<div class="vl" style="left:230px;top:148px;height:568px;background:#777"></div>
<div class="a" style="left:231px;top:393px;width:11px;height:49px;background:#f7f7f7;border:1px solid #808080;border-left:none"></div>
<div class="a" style="left:232px;top:414px;width:7px;height:7px;border-radius:50%;border:1px solid #a0a0a0;background:#dcdcdc"></div>
<div class="hl" style="left:231px;top:714px;width:1689px;background:#4a4f8c"></div>
<div class="hl" style="left:231px;top:715px;width:1689px;background:#d8daf0"></div>
<div class="vl" style="left:1918px;top:119px;height:598px;background:#0c2c5e;width:2px"></div>
<div class="a" style="left:809px;top:120px;width:10px;height:1px;background:repeating-linear-gradient(90deg,#999 0 1px,transparent 1px 3px)"></div>
<!-- heads-up toolbar -->
<svg style="left:899px;top:125px" width="20" height="21" viewBox="0 0 20 21"><path d="M7.4 12.6 L1.8 18.6" stroke="#4a8fc0" stroke-width="3" stroke-linecap="round"/><circle cx="12" cy="8" r="6.6" fill="#f4f6f8" stroke="#555" stroke-width="1.1"/><path d="M12 3.4 L10.4 5.4 H13.6 Z M12 12.6 L10.4 10.6 H13.6 Z M7.4 8 L9.4 6.4 V9.6 Z M16.6 8 L14.6 6.4 V9.6 Z" fill="#666"/></svg>
<svg style="left:924px;top:125px" width="21" height="21" viewBox="0 0 21 21"><rect x="7.4" y="1" width="12.6" height="12.6" fill="none" stroke="#444" stroke-width="1" stroke-dasharray="2.4 1.6"/><path d="M7.4 13 L1.8 19" stroke="#4a8fc0" stroke-width="3" stroke-linecap="round"/><circle cx="11.6" cy="8.4" r="6.2" fill="#f0f3f6" stroke="#666" stroke-width="1.1"/></svg>
<svg style="left:951px;top:125px" width="21" height="21" viewBox="0 0 21 21"><path d="M1.4 13.6 L12.8 3.2 L17.8 1.6 L19 4.2 L16.4 8 L6 19 Z" fill="#dcdcdc" stroke="#888" stroke-width="1"/><ellipse cx="3.8" cy="16.2" rx="2" ry="3.4" transform="rotate(-45 3.8 16.2)" fill="#f0f0f0" stroke="#888" stroke-width=".8"/><path d="M19.4 14 H12 M14.6 10.8 L11.2 14 L14.6 17.2" fill="none" stroke="#2d78b0" stroke-width="2.2"/></svg>
<svg style="left:977px;top:126px" width="20" height="19" viewBox="0 0 20 19"><path d="M1 5 C1 1 19 1 19 5 V14 C19 18 1 18 1 14 Z" fill="#e8e8e8" stroke="#777" stroke-width="1"/><path d="M1 5.6 L6.4 7.4 V17.4 L1 15 Z" fill="#4a9ac8" stroke="#1d5f8a" stroke-width=".8"/><path d="M19 5.6 L13.6 7.4 V17.4 L19 15 Z" fill="#4a9ac8" stroke="#1d5f8a" stroke-width=".8"/><path d="M6.4 7.4 C6.4 4.4 13.6 4.4 13.6 7.4 V16.4 H6.4 Z" fill="#c8c8c8" stroke="#888" stroke-width=".7"/><path d="M2 9 L5.4 7.6 M2 12 L5.4 10.6 M2 15 L5.4 13.6 M14.6 7.6 L18 9 M14.6 10.6 L18 12 M14.6 13.6 L18 15" stroke="#b8def2" stroke-width=".7"/></svg>
<svg style="left:1002px;top:125px" width="22" height="21" viewBox="0 0 22 21"><path d="M2.4 14 L13.4 4 L18 2.6 L19.2 5 L16.8 8.6 L7 19 Z" fill="#dcdcdc" stroke="#888" stroke-width="1"/><ellipse cx="4.8" cy="16.4" rx="2" ry="3.4" transform="rotate(-45 4.8 16.4)" fill="#f0f0f0" stroke="#888" stroke-width=".8"/><path d="M6.4 .6 L11.6 .6 L8.8 4.6 L12 4.6 L3.6 10.4 L6.6 5.8 L3.4 5.8 Z" fill="#f08a1c" stroke="#c85a00" stroke-width=".5"/><text x="15.4" y="20" font-family="Liberation Serif,serif" font-size="12" fill="#2d78b0" text-anchor="middle">A</text></svg>
<svg style="left:1029px;top:125px" width="20" height="20" viewBox="0 0 20 20"><path d="M1 6 L6.4 1 H19 V13.4 L13.6 19 H1 Z" fill="#fbfbfb" stroke="#444" stroke-width="1"/><path d="M6.4 1 V13.4 H19 M6.4 13.4 L1 19" fill="none" stroke="#444" stroke-width=".8"/><rect x="1" y="6" width="12.6" height="13" fill="#6cb4e0" stroke="#1d5f8a" stroke-width="1"/><path d="M1.8 6.8 H8 V18.2 H1.8 Z" fill="#a8d6f0" opacity=".6"/><path d="M12.6 1.6 V5.4 M11 3.8 L12.6 5.6 L14.2 3.8 M18.4 9.6 H14.6 M16 8 L14.4 9.6 L16 11.2" fill="none" stroke="#333" stroke-width=".9"/></svg>
<div class="arrd" style="left:1056px;top:133px;margin:0 0 0 .5px;border-top-color:#9a9a9a"></div>
<svg style="left:1070px;top:125px" width="19" height="21" viewBox="0 0 19 21"><path d="M1 3.6 L9.4 1 L18 3.6 V17.4 L9.4 20 L1 17.4 Z" fill="#f4f4f4" stroke="#666" stroke-width="1"/><path d="M1 3.6 L9.4 6 V20 L1 17.4 Z" fill="#6cb4e0" stroke="#1d5f8a" stroke-width=".9"/><path d="M9.4 6 L18 3.6" stroke="#666" stroke-width=".9"/><path d="M2 5 L5.4 6 V18 L2 17 Z" fill="#b0dcf4" opacity=".7"/></svg>
<div class="arrd" style="left:1095.5px;top:133px;margin:0 0 0 .5px;border-top-color:#9a9a9a"></div>
<svg style="left:1110px;top:127px" width="19" height="17" viewBox="0 0 19 17"><path d="M.8 8.6 C4 3 15 3 18.2 8.6 C15 14 4 14 .8 8.6 Z" fill="#e4e4e4" stroke="#aaa" stroke-width="1"/><circle cx="9.5" cy="8.4" r="3.6" fill="#8a8a8a"/><circle cx="9.5" cy="8.4" r="1.6" fill="#333"/><path d="M9.5 .6 V16.4" stroke="#555" stroke-width="1.2"/></svg>
<div class="arrd" style="left:1135.5px;top:133px;margin:0 0 0 .5px;border-top-color:#9a9a9a"></div>
<svg style="left:1149px;top:124px" width="21" height="22" viewBox="0 0 21 22"><circle cx="9.4" cy="9.4" r="8.6" fill="#e8e8e8"/><path d="M9.4 9.4 L9.4 .8 A8.6 8.6 0 0 0 .9 8 Z" fill="#3f7fd8"/><path d="M9.4 9.4 L.9 8 A8.6 8.6 0 0 0 7 17.7 Z" fill="#3fae3a"/><path d="M9.4 9.4 L7 17.7 A8.6 8.6 0 0 0 17.6 12 Z" fill="#f4c414"/><path d="M9.4 9.4 L17.6 12 A8.6 8.6 0 0 0 9.4 .8 Z" fill="#e2402a"/><ellipse cx="6.6" cy="4.8" rx="3.6" ry="2" transform="rotate(-25 6.6 4.8)" fill="#fff" opacity=".45"/><path d="M8.4 20.8 L9.6 16.6 L17.2 9 L20.2 12 L12.6 19.6 Z" fill="#f0b428" stroke="#7a5400" stroke-width=".8"/><path d="M8.4 20.8 L9.6 16.6 L12.6 19.6 Z" fill="#f6e0b0" stroke="#7a5400" stroke-width=".6"/><path d="M17.2 9 L18.4 7.8 L21 10.6 L20.2 12 Z" fill="#e06a6a" stroke="#7a2a2a" stroke-width=".6"/></svg>
<svg style="left:1175px;top:124px" width="20" height="22" viewBox="0 0 20 22"><circle cx="10" cy="9.4" r="8.6" fill="#e8e8e8"/><path d="M10 9.4 L10 .8 A8.6 8.6 0 0 0 1.5 8 Z" fill="#3f7fd8"/><path d="M10 9.4 L1.5 8 A8.6 8.6 0 0 0 7.6 17.7 Z" fill="#3fae3a"/><path d="M10 9.4 L7.6 17.7 A8.6 8.6 0 0 0 18.2 12 Z" fill="#f4c414"/><path d="M10 9.4 L18.2 12 A8.6 8.6 0 0 0 10 .8 Z" fill="#e2402a"/><ellipse cx="7.2" cy="4.8" rx="3.6" ry="2" transform="rotate(-25 7.2 4.8)" fill="#fff" opacity=".45"/><path d="M.6 14 L3.4 14 L3.4 21.4 L.6 21.4 Z M.6 14 H19.4 V21.4 H.6 Z" fill="#1e1e1e"/><path d="M3.2 15.6 H6 V17.8 H3.2 Z M8.6 15.6 H11.4 V17.8 H8.6 Z M14 15.6 H16.8 V17.8 H14 Z M6 17.8 H8.6 V20 H6 Z M11.4 17.8 H14 V20 H11.4 Z M16.8 17.8 H19 V20 H16.8 Z M1 17.8 H3.2 V20 H1 Z" fill="#e8e8e8"/><path d="M4.6 14.2 C6 11.6 14 11.6 15.4 14.2 Z" fill="#c8a040" opacity=".0"/></svg>
<div class="arrd" style="left:1201.5px;top:133px;margin:0 0 0 .5px;border-top-color:#9a9a9a"></div>
<svg style="left:1215px;top:126px" width="20" height="18" viewBox="0 0 20 18"><rect x=".8" y=".8" width="18.4" height="12" fill="#dcdcdc" stroke="#555" stroke-width="1.2"/><rect x="2" y="2" width="16" height="5" fill="#eee" opacity=".7"/><path d="M10 13 V16.4 M6 16.8 H14" stroke="#555" stroke-width="1.4"/></svg>
<div class="arrd" style="left:1241.5px;top:133px;margin:0 0 0 .5px;border-top-color:#9a9a9a"></div>
<!-- doc window controls -->
<svg style="left:1790px;top:128px" width="13" height="14" viewBox="0 0 13 14"><rect x=".6" y=".6" width="11.8" height="12.8" fill="#fff" stroke="#999" stroke-width="1"/><path d="M2 .6 V13.4" stroke="#999" stroke-width="1"/><path d="M6.2 4.6 L3.6 7 L6.2 9.4 Z" fill="#999"/></svg>
<svg style="left:1816px;top:128px" width="13" height="14" viewBox="0 0 13 14"><rect x=".6" y=".6" width="11.8" height="12.8" fill="#fff" stroke="#999" stroke-width="1"/><path d="M11 .6 V13.4" stroke="#999" stroke-width="1"/><path d="M6.8 4.6 L9.4 7 L6.8 9.4 Z" fill="#999"/></svg>
<div class="a" style="left:1844px;top:138px;width:10px;height:3px;background:#a8a8a8"></div>
<svg style="left:1868px;top:129px" width="14" height="12" viewBox="0 0 14 12"><path d="M3.4 3.2 V.8 H13 V7.6 H10" fill="none" stroke="#999" stroke-width="1.1"/><rect x=".7" y="3.6" width="9.2" height="7" fill="#fff" stroke="#999" stroke-width="1.1"/></svg>
<svg style="left:1896px;top:129px" width="12" height="12" viewBox="0 0 12 12"><path d="M.8 .8 L11.2 11.2 M11.2 .8 L.8 11.2" stroke="#a0a0a0" stroke-width="1.2"/></svg>
<!-- task pane tabs -->
<div class="a" style="left:1887px;top:203px;width:33px;height:210px;background:#d3d3d3;border:1px solid #a0a0a0;border-right:none"></div>
<div class="a" style="left:1888px;top:204px;width:32px;height:28px;background:#f7f7f7"></div>
<div class="hl" style="left:1888px;top:232px;width:32px;background:#a6a6a6"></div>
<div class="hl" style="left:1888px;top:262px;width:32px;background:#a6a6a6"></div>
<div class="hl" style="left:1888px;top:292px;width:32px;background:#a6a6a6"></div>
<div class="hl" style="left:1888px;top:322px;width:32px;background:#a6a6a6"></div>
<div class="hl" style="left:1888px;top:352px;width:32px;background:#a6a6a6"></div>
<div class="hl" style="left:1888px;top:382px;width:32px;background:#a6a6a6"></div>
<svg style="left:1894px;top:208px" width="20" height="19" viewBox="0 0 20 19"><path d="M1 9.4 L10 1.4 L19 9.4" fill="none" stroke="#1f5f94" stroke-width="2.2"/><path d="M3.6 9.4 V17.8 H16.4 V9.4" fill="#fff" stroke="#333" stroke-width="1.3"/><rect x="8.2" y="11.2" width="4" height="6.6" fill="#fff" stroke="#333" stroke-width="1.2"/></svg>
<svg style="left:1896px;top:238px" width="16" height="20" viewBox="0 0 16 20"><g fill="#e8e8e8" stroke="#333" stroke-width="1"><path d="M1 4.4 L4 2.6 L6 4 V17.6 L3 19 L1 17 Z"/><path d="M6 3.4 L9 1.6 L11 3 V17.6 L8 19 L6 17.6 Z"/><path d="M11 2.6 L13.6 1 L15 2.6 V16 L12.6 18 L11 17.6 Z"/></g></svg>
<svg style="left:1893px;top:269px" width="22" height="18" viewBox="0 0 22 18"><path d="M1 17 V1.6 H7.6 L9.4 4 H16 V7" fill="#e9e9e9" stroke="#444" stroke-width="1.2"/><path d="M1 17 L5.4 7 H21 L16.6 17 Z" fill="#f4f4f4" stroke="#444" stroke-width="1.2"/></svg>
<svg style="left:1895px;top:299px" width="18" height="17" viewBox="0 0 18 17"><rect x=".7" y=".7" width="16.6" height="15.6" rx="2" fill="#f4f4f4" stroke="#333" stroke-width="1.2"/><path d="M3 3.6 H11 V6.4 H8.6 V10 H11.6 V13.4 H3.4 V10 H6 V6.4 H3 Z" fill="#f4c414" stroke="#7a5c00" stroke-width=".8"/><rect x="12.6" y="3" width="2.6" height="3" fill="#f4c414" stroke="#7a5c00" stroke-width=".6"/><rect x="13" y="8" width="2.4" height="6" fill="#999"/></svg>
<svg style="left:1895px;top:328px" width="18" height="18" viewBox="0 0 18 18"><circle cx="9" cy="9" r="8.4" fill="#e8e8e8"/><path d="M9 9 L9 .6 A8.4 8.4 0 0 0 .7 7.6 Z" fill="#3f7fd8"/><path d="M9 9 L.7 7.6 A8.4 8.4 0 0 0 6.6 17 Z" fill="#3fae3a"/><path d="M9 9 L6.6 17 A8.4 8.4 0 0 0 17 11.6 Z" fill="#f4c414"/><path d="M9 9 L17 11.6 A8.4 8.4 0 0 0 9 .6 Z" fill="#e2402a"/><ellipse cx="6.4" cy="4.6" rx="3.6" ry="2" transform="rotate(-25 6.4 4.6)" fill="#fff" opacity=".5"/></svg>
<svg style="left:1895px;top:358px" width="18" height="19" viewBox="0 0 18 19"><rect x=".7" y=".7" width="16.6" height="17.6" rx="1" fill="#fdfdfd" stroke="#333" stroke-width="1.3"/><rect x=".7" y=".7" width="16.6" height="3" fill="#2d78b0"/><rect x="2.8" y="5.8" width="3.4" height="2.6" fill="#2d87c6" stroke="#1c5f92" stroke-width=".5"/><rect x="2.8" y="9.8" width="3.4" height="2.6" fill="#2d87c6" stroke="#1c5f92" stroke-width=".5"/><rect x="2.8" y="13.8" width="3.4" height="2.6" fill="#2d87c6" stroke="#1c5f92" stroke-width=".5"/><path d="M8 7.1 H15 M8 11.1 H15 M8 15.1 H15" stroke="#333" stroke-width="1.2"/></svg>
<svg style="left:1894px;top:388px" width="20" height="20" viewBox="0 0 20 20"><defs><radialGradient id="bg3" cx=".4" cy=".35" r=".7"><stop offset="0" stop-color="#5aa0e0"/><stop offset=".6" stop-color="#164a8a"/><stop offset="1" stop-color="#0a2450"/></radialGradient></defs><circle cx="10" cy="10" r="9.4" fill="url(#bg3)"/><circle cx="10" cy="10.4" r="4" fill="none" stroke="#d8e8f8" stroke-width="1"/><path d="M8.8 8.4 L12 10.4 L8.8 12.4 Z" fill="#fff"/><path d="M10 2.4 L8.6 4.4 H11.4 Z M4 6 L3.6 8.2 L5.8 7.2 Z M16 6 L16.4 8.2 L14.2 7.2 Z M5 15.4 L7 15.8 L6 14 Z M15 15.4 L13 15.8 L14 14 Z" fill="#cfe2f6"/></svg>
<!--MODEL-->
<svg style="left:0;top:0" width="1920" height="1034" viewBox="0 0 1920 1034">
<defs>
<linearGradient id="gHole" x1="0" y1=".2" x2="1" y2=".6"><stop offset="0" stop-color="#1c1e26"/><stop offset=".5" stop-color="#5c6072"/><stop offset="1" stop-color="#a8acc4"/></linearGradient>
<linearGradient id="gHoleB" x1="0" y1=".2" x2="1" y2=".6"><stop offset="0" stop-color="#242220"/><stop offset=".5" stop-color="#6e6862"/><stop offset="1" stop-color="#c8c0b8"/></linearGradient>
<linearGradient id="gBore" x1="0" y1="0" x2="1" y2=".3"><stop offset="0" stop-color="#8e92a8"/><stop offset=".45" stop-color="#70748a"/><stop offset="1" stop-color="#14161c"/></linearGradient>
<linearGradient id="gSp" gradientUnits="userSpaceOnUse" x1="1224" y1="318" x2="1214" y2="388"><stop offset="0" stop-color="#44464f"/><stop offset=".22" stop-color="#c4c8d8"/><stop offset=".42" stop-color="#ffffff"/><stop offset=".62" stop-color="#c8cce4"/><stop offset=".85" stop-color="#8488a4"/><stop offset="1" stop-color="#50546a"/></linearGradient>
<linearGradient id="gTube" gradientUnits="userSpaceOnUse" x1="845" y1="378" x2="893" y2="330"><stop offset="0" stop-color="#8a3c3c"/><stop offset=".1" stop-color="#c66262"/><stop offset=".4" stop-color="#de7474"/><stop offset=".62" stop-color="#d46c6c"/><stop offset=".84" stop-color="#b45656"/><stop offset="1" stop-color="#8a3e3e"/></linearGradient>
<linearGradient id="gYel" gradientUnits="userSpaceOnUse" x1="800" y1="282" x2="838" y2="262"><stop offset="0" stop-color="#7a7a04"/><stop offset=".4" stop-color="#727200"/><stop offset="1" stop-color="#4a4a00"/></linearGradient>
<linearGradient id="gNeck" x1="0" y1="0" x2=".3" y2="1"><stop offset="0" stop-color="#5e6276"/><stop offset="1" stop-color="#8c92aa"/></linearGradient>
<linearGradient id="gNeckB" x1="0" y1="0" x2="1" y2=".6"><stop offset="0" stop-color="#7e7872"/><stop offset="1" stop-color="#aaa29a"/></linearGradient>
<linearGradient id="gFil" x1="0" y1="0" x2="1" y2="0"><stop offset="0" stop-color="#a8acc8"/><stop offset=".5" stop-color="#8086a0"/><stop offset="1" stop-color="#9ca0bc"/></linearGradient>
<linearGradient id="gSlot" x1="0" y1="0" x2="1" y2="0"><stop offset="0" stop-color="#50525e"/><stop offset=".45" stop-color="#f4f6ff"/><stop offset="1" stop-color="#8a8ea8"/></linearGradient>
</defs>
<g id="upper-arm-back">
<ellipse cx="810" cy="222" rx="21.5" ry="20.5" fill="#8e8882" stroke="#15151c" stroke-width=".9"/>
<ellipse cx="811" cy="224" rx="18.5" ry="18" fill="#b4aca4" stroke="#15151c" stroke-width=".8"/>
<ellipse cx="812.5" cy="227" rx="15.5" ry="15.5" fill="#8c8680" stroke="#15151c" stroke-width=".8"/>
<polygon points="812.5,215 818,213.5 830.6,217.6 860.7,225.8 854.5,239.6 823.7,232.7 821,240" fill="url(#gNeckB)" stroke="#0e0e14" stroke-width="1.1" stroke-linejoin="round" />
<path d="M823 236 L854.5 239.6 L930 250.5 L961.4 257.1 L990.3 269.1 L994.7 273.5 L992.9 277.9 L990.3 276.6 L961.4 265.3 L930 258.6 L855.7 249 L839.4 248.4 L823 250.3 Z" fill="#d6ccc2" stroke="#0e0e14" stroke-width="1.1" stroke-linejoin="round" />
<path d="M830.6 237 V248.6 M836.9 238 V248 M932.4 251 V259" stroke="#15151c" stroke-width=".9" fill="none"/>
<ellipse cx="801" cy="238.5" rx="22.6" ry="19" fill="#cfc6bc" stroke="#15151c" stroke-width=".9" transform="rotate(-12 801 238.5)"/>
<ellipse cx="800.6" cy="240.6" rx="14.6" ry="13.6" fill="url(#gHoleB)" stroke="#15151c" stroke-width=".9" transform="rotate(-12 800.6 240.6)"/>
<path d="M800 231.6 L806 230.6 L811.4 235.4 L809.4 236.2 Z" fill="#fff"/>
</g>
<g id="shock">
<polygon points="832,292 839.4,288.5 847,298 832,299" fill="#c86060" stroke="#0e0e14" stroke-width="1.1" stroke-linejoin="round" />
<polygon points="823,257.9 845.7,280.5 834.4,297.5 800,296 795.4,289.3 813,267.9" fill="url(#gYel)" stroke="#0e0e14" stroke-width="1.1" stroke-linejoin="round" />
<polygon points="767.7,269.2 769,266 785.3,251.6 790.3,250.3 793,252 800.4,265.4 813,267.9 810.5,272.9 795.4,289.8 789,287.5 769,273" fill="#d46a6a" stroke="#0e0e14" stroke-width="1.1" stroke-linejoin="round" />
<path d="M800.4 265.4 L793.5 271 M812 270 L796 288 M810.4 268.6 L794.6 286.4 M808.8 268 L793 285" stroke="#401818" stroke-width=".7" fill="none"/>
<ellipse cx="787" cy="271.4" rx="10.4" ry="7.6" fill="#c46262" stroke="#15151c" stroke-width=".8" transform="rotate(8 787 271.4)"/>
<ellipse cx="787.4" cy="269.6" rx="8.8" ry="6.2" fill="#fff" stroke="#15151c" stroke-width=".8" transform="rotate(8 787.4 269.6)"/>
<polygon points="808.9,320 867,320 922.2,371.3 924.4,374.5 924,377.5 897,404 893.5,403.6 890.7,400.7" fill="url(#gTube)" stroke="#0e0e14" stroke-width="1.1" stroke-linejoin="round" />
<polygon points="793,324 806,322.6 801.6,327.8 797,328.4" fill="#6e6e00" stroke="#0e0e14" stroke-width="1.1" stroke-linejoin="round" />
<linearGradient id="gRod" gradientUnits="userSpaceOnUse" x1="938" y1="425" x2="945.4" y2="417.6"><stop offset="0" stop-color="#009c9c"/><stop offset=".3" stop-color="#00cfcf"/><stop offset=".7" stop-color="#00d4d4"/><stop offset="1" stop-color="#00a4a4"/></linearGradient>
<polygon points="908.3,394.6 915.6,388.2 975.7,447 969,454.8" fill="url(#gRod)" stroke="#101010" stroke-width="1.1" stroke-linejoin="round" />
<polygon points="976.8,469.6 984,462 991.7,455.7 995,460 996.5,465.3 985.3,474.9 980,473" fill="#c4bcb0" stroke="#2a2826" stroke-width="0.9" stroke-linejoin="round" />
<path d="M981 466.4 L989 473 M984 463.4 L992.4 470 M987 460.4 L995 466.6" stroke="#4a4640" stroke-width=".8"/>
<g transform="rotate(-40 977.3 456.5)"><ellipse cx="977.3" cy="458.6" rx="33.6" ry="7.6" fill="#a8a298" stroke="#15151c" stroke-width="1"/><ellipse cx="977.3" cy="456" rx="33.6" ry="7.6" fill="#d4ccc0" stroke="#15151c" stroke-width="1"/><ellipse cx="977.3" cy="456" rx="29" ry="5.2" fill="#6e6a62" stroke="#15151c" stroke-width=".8"/><ellipse cx="977.3" cy="457" rx="27.6" ry="4.2" fill="#cfc7bb" stroke="#3a3836" stroke-width=".6"/><ellipse cx="977.3" cy="456.6" rx="22" ry="2.4" fill="#8e887e" stroke="#3a3836" stroke-width=".6"/><ellipse cx="975" cy="456.4" rx="8" ry="4" fill="#e4dcd0" stroke="#3a3836" stroke-width=".6"/></g>
<polygon points="962.6,448.4 969.4,441.4 973,447 967,453.6" fill="#00cccc" stroke="none" stroke-width="0" stroke-linejoin="round" />
</g>
<g id="upper-arm-front">
<ellipse cx="773.4" cy="297" rx="21" ry="20" fill="#9ea2bc" stroke="#15151c" stroke-width=".9"/>
<ellipse cx="775" cy="299" rx="18.4" ry="17.6" fill="#777b92" stroke="#15151c" stroke-width=".8"/>
<path d="M777.7 288.9 L780 286.6 L795.3 293.9 L825.5 298.3 L820.5 311.5 L786.5 310.2 L779 304 Z" fill="url(#gNeck)" stroke="#0e0e14" stroke-width="1.1" stroke-linejoin="round" />
<polygon points="860.7,225.8 918.6,230.8 970,235.5 980.3,237.6 1018,249 1097.2,276.6 1109.8,277.9 1106,289.2 1104.8,291.7 1084.6,293 975,310.4 948.7,314.6 932.4,315.3 873.3,313.4 820.5,311.5 825.5,298.3 848.2,297.4 880,297.3 905,296.6 931,294.6 950,292.4 970,289.6 984,285.5 991.6,281.6 995.2,277 994.7,273.5 990.3,269.1 961.4,257.1 930,250.5 854.5,239.6" fill="#81879d" stroke="#0e0e14" stroke-width="1.1" stroke-linejoin="round" />
<polygon points="786.5,311.5 820.5,311.5 873.3,313.4 932.4,315.3 932.4,324.3 873.3,322.2 815.5,320.3 786.5,325.3 780,326" fill="#a3a7c3" stroke="#0e0e14" stroke-width="1.1" stroke-linejoin="round" />
<polygon points="932.4,315.3 948.7,314.6 948.7,323.8 932.4,324.3" fill="url(#gFil)" stroke="#0e0e14" stroke-width="1.1" stroke-linejoin="round" />
<polygon points="948.7,314.6 975,310.4 1084.6,293 1084.6,301.8 975,319.4 948.7,323.8" fill="#878ba5" stroke="#0e0e14" stroke-width="1.1" stroke-linejoin="round" />
<polygon points="1084.6,293 1104.8,291.7 1104,300.5 1084.6,301.8" fill="url(#gFil)" stroke="#0e0e14" stroke-width="1.1" stroke-linejoin="round" />
<ellipse cx="764.5" cy="317.5" rx="22" ry="21" fill="#a3a7c3" stroke="#15151c" stroke-width=".9"/>
<ellipse cx="764.5" cy="318" rx="14.6" ry="13.9" fill="url(#gHole)" stroke="#15151c" stroke-width=".9"/>
<path d="M763.6 305.4 L769 306 L776.6 311.6 L774 312.2 Z" fill="#fff"/>
</g>
<g id="hub">
<path d="M1121.5 266 L1123.4 252.7 L1127.1 245.1 L1135.3 238.9 L1142.9 238.2 L1160.5 240.7 L1170.5 245.1 L1199.4 270.3 L1198.2 275.3 L1184.4 263.4 L1170.5 294.2 L1121.5 275 Z" fill="#a3a7c3" stroke="#0e0e14" stroke-width="1.1" stroke-linejoin="round" />
<path d="M1127.1 245.1 L1135.3 238.9 L1142.9 238.2 L1160.5 240.7 L1170.5 245.1 L1168.6 247.6 L1159.6 243.4 L1143 240.9 L1136.4 241.4 L1129 247 Z" fill="#7a7e96" stroke="#0e0e14" stroke-width="0.7" stroke-linejoin="round" />
<path d="M1142.9 238.2 L1143 240.9 M1160.5 240.7 L1159.6 243.4" stroke="#15151c" stroke-width=".7"/>
<polygon points="1170.5,245.1 1199.4,270.3 1198.2,275.3 1184.4,263.4 1168.6,247.6" fill="#5a5c6e" stroke="#0e0e14" stroke-width="1.1" stroke-linejoin="round" />
<polygon points="1184.4,263.4 1198.2,275.3 1195.7,313 1180.6,309.3 1160,290 1166.7,291 1170.5,294.2" fill="#585a6c" stroke="#0e0e14" stroke-width="1.1" stroke-linejoin="round" />
<polygon points="1198.2,275.3 1199.6,272.6 1196,316 1190,330 1180.6,350 1179.8,330 1180.6,309.3 1195.7,313" fill="#16181e" stroke="#0e0e14" stroke-width="1.1" stroke-linejoin="round" />
<path d="M1121.5 269 Q1124 260.5 1130.3 257.7 Q1137 254.2 1144.1 254.6 Q1152 255 1157.9 259 Q1164 263.6 1166.7 270.3 Q1169 276 1168.6 280.3 Q1168.4 286 1166.7 291 L1151.7 282.9 L1145.4 279.1 L1125.3 274.7 L1116.5 276.6 Z" fill="url(#gBore)" stroke="#0e0e14" stroke-width="1.1" stroke-linejoin="round" />
<path d="M1186.9 314.3 L1262.3 325 Q1268 345 1263 368 Q1259 386 1252.4 391.6 L1176.9 379 L1180 340 Z" fill="url(#gSp)" stroke="#0e0e14" stroke-width="1.1" stroke-linejoin="round" />
<ellipse cx="1258.6" cy="358.6" rx="6.6" ry="33.6" fill="#14161b" stroke="#15151c" stroke-width=".8" transform="rotate(9 1258.6 358.6)"/>
<polygon points="1180.6,309.3 1186.9,314.3 1180,340 1176.9,379 1187,381.5 1174.4,508.5 1154.3,547.5 1160.6,506 1176.9,380.3" fill="#15171d" stroke="#0e0e14" stroke-width="1.1" stroke-linejoin="round" />
<ellipse cx="1174.2" cy="446.9" rx="6" ry="36" fill="url(#gSlot)" stroke="#15151c" stroke-width=".8" transform="rotate(7 1174.2 446.9)"/>
<polygon points="1109.8,277.9 1116.5,276.6 1125.3,274.7 1145.4,279.1 1151.7,282.9 1180.6,309.3 1179.5,340 1176.9,380.3 1160.6,506 1154.3,547.5 1110.3,561.3 1100,557 1077.1,543.7 1077.6,520 1078.9,511 1083.9,499.7 1095,494 1115.3,485.9 1120.3,478.4 1132.9,370.2 1131.7,357.7 1121.5,347 1105.3,330.5 1103.3,324.4 1107,290.4 1108.4,283" fill="#a3a7c3" stroke="#0e0e14" stroke-width="1.1" stroke-linejoin="round" />
<path d="M1108.4 283 L1109.8 277.9 L1116.5 276.6 L1125.3 274.7 L1145.4 279.1 L1151.7 282.9 L1180.6 309.3 L1179.6 312 L1150.6 285.8 L1144.6 282 L1125.4 277.6 L1117.4 279.2 L1111.4 281.4 Z" fill="#7c8098" stroke="#0e0e14" stroke-width="0.7" stroke-linejoin="round" />
<path d="M1125.3 274.7 L1125.4 277.6 M1145.4 279.1 L1144.6 282" stroke="#15151c" stroke-width=".7"/>
<ellipse cx="1129.2" cy="310.9" rx="12.2" ry="11.2" fill="#60647a" stroke="#0e0e14" stroke-width="1.1" transform="rotate(-20 1129.2 310.9)"/>
<ellipse cx="1129.9" cy="309.2" rx="11.346" ry="9.408" fill="#a3a7c3" stroke="#0e0e14" stroke-width=".9" transform="rotate(-20 1129.2 310.9)"/>
<ellipse cx="1130.7" cy="307.5" rx="10.248" ry="7.84" fill="url(#gHole)" stroke="#0e0e14" stroke-width="1" transform="rotate(-20 1129.2 310.9)"/>
<ellipse cx="1105.3" cy="528.8" rx="11.8" ry="11.2" fill="#60647a" stroke="#0e0e14" stroke-width="1.1" transform="rotate(-20 1105.3 528.8)"/>
<ellipse cx="1106" cy="527.1" rx="10.974" ry="9.408" fill="#a3a7c3" stroke="#0e0e14" stroke-width=".9" transform="rotate(-20 1105.3 528.8)"/>
<ellipse cx="1106.8" cy="525.4" rx="9.912" ry="7.84" fill="url(#gHole)" stroke="#0e0e14" stroke-width="1" transform="rotate(-20 1105.3 528.8)"/>
</g>
<g id="lower-arm">
<path d="M989.6 469.6 C990.3 468.4 992.0 464.0 993.8 462.1 C995.6 460.2 997.7 459.3 1000.2 458.4 C1002.7 457.5 1005.5 456.8 1008.7 456.8 C1011.9 456.9 1015.9 457.3 1019.4 458.7 C1022.9 460.1 1026.3 461.7 1030 465.3 C1033.7 468.9 1038.0 475.8 1041.7 480.2 C1045.4 484.6 1048.2 488.8 1052.3 491.9 C1056.4 495.0 1061.0 497.2 1066.2 498.8 C1071.4 500.4 1080.4 501.1 1083.2 501.5 L1083.2 508.9 C1082.5 508.8 1084.1 509.3 1078.9 508.4 C1073.8 507.5 1058.8 506.0 1052.3 503.6 C1045.8 501.2 1043.7 498.2 1039.6 494 C1035.5 489.8 1031.5 482.4 1027.9 478.1 C1024.4 473.8 1021.5 470.4 1018.3 468.3 C1015.1 466.2 1012.4 465.6 1008.7 465.5 C1005.0 465.4 999.9 466.2 996 468 C992.1 469.8 987.1 474.7 985.3 476 Z" fill="#8d91ab" stroke="#0e0e14" stroke-width="0.9" stroke-linejoin="round" />
<path d="M991.2 468 C992.0 467.2 993.1 464.6 996 463.2 C998.9 461.8 1004.9 460.0 1008.7 459.8 C1012.5 459.6 1015.4 460.3 1018.8 461.9 C1022.2 463.5 1025.3 465.8 1028.9 469.6 C1032.5 473.5 1036.7 480.7 1040.6 485 C1044.5 489.3 1048.0 492.8 1052.3 495.6 C1056.6 498.4 1061.0 500.5 1066.2 502 C1071.4 503.5 1080.4 504.2 1083.2 504.7" fill="none" stroke="#0e0e14" stroke-width="0.8" stroke-linejoin="round" />
<path d="M992.8 469.6 C993.7 468.9 995.5 466.6 998.1 465.5 C1000.8 464.4 1005.3 462.8 1008.7 462.7 C1012.1 462.6 1015.2 463.2 1018.5 465.1 C1021.8 467.0 1024.8 469.7 1028.4 473.8 C1032.0 477.9 1036.1 485.2 1040.1 489.6 C1044.1 494.0 1045.8 497.1 1052.3 499.9 C1058.8 502.7 1074.5 505.2 1078.9 506.3" fill="none" stroke="#2a2c38" stroke-width="0.7" stroke-linejoin="round" />
<polygon points="1097.7,460.8 1120.3,454.5 1119.8,470.8 1097.7,480.9" fill="#8d91ab" stroke="#0e0e14" stroke-width="0.8" stroke-linejoin="round" />
<polygon points="1097.7,480.9 1107.8,474.6 1119.3,473.8 1114.1,485.9 1092.7,493.4 1095.2,483.4" fill="#b4b8d0" stroke="#0e0e14" stroke-width="0.8" stroke-linejoin="round" />
<path d="M982.1 484.5 C982.6 483.1 983.0 478.8 985.3 476 C987.6 473.2 992.1 469.8 996 468 C999.9 466.2 1005.0 465.4 1008.7 465.5 C1012.4 465.6 1015.1 466.2 1018.3 468.3 C1021.5 470.4 1024.4 473.8 1027.9 478.1 C1031.5 482.4 1035.5 489.8 1039.6 494 C1043.7 498.2 1045.8 501.2 1052.3 503.6 C1058.8 506.0 1074.5 507.6 1078.9 508.4 L1080.5 507.3 L1077.9 541.8 L993.8 545.4 L982.2 548 L979.6 518.8 L978.2 493.1 Z" fill="#a3a7c3" stroke="#0e0e14" stroke-width="1.1" stroke-linejoin="round" />
<path d="M978.2 493.1 L982.1 484.5 L985.3 478.1 L993.8 545.4 L982.2 548 L979.6 518.8 Z" fill="#9195b0" stroke="#0e0e14" stroke-width="0.8" stroke-linejoin="round" />
<ellipse cx="1006.6" cy="493.5" rx="10" ry="9.4" fill="#5a5c6c" stroke="#15151c" stroke-width=".9"/>
<ellipse cx="1007" cy="494.6" rx="7.4" ry="6.8" fill="#2e2e34" stroke="#15151c" stroke-width=".6"/>
<ellipse cx="1006.6" cy="495.6" rx="5.6" ry="4.8" fill="#b4ac9e" stroke="#2a2826" stroke-width=".7"/>
<path d="M1002 494 L1008 492 L1012 494.6 M1002 497 H1011" stroke="#4a4640" stroke-width=".8" fill="none"/>
<path d="M1003.6 487.4 L1009 486 L1013 489 L1008 489.4 Z" fill="#fff"/>
<polygon points="904.3,548.4 979.6,518.8 981.4,548 907.9,574.6" fill="#6f7389" stroke="#0e0e14" stroke-width="1.1" stroke-linejoin="round" />
<polygon points="953,494.9 963.6,497 972.5,496.3 978.2,493.1 979.6,518.8 935.3,535.6 945.1,512.6" fill="#7c8098" stroke="#0e0e14" stroke-width="0.8" stroke-linejoin="round" />
<polygon points="953,495.3 963.6,497.4 975.2,496 970.7,505.5 958.3,509.9 945.1,513" fill="#9ea2bc" stroke="#0e0e14" stroke-width="0.8" stroke-linejoin="round" />
<polygon points="947.7,509.9 970.7,505.5 963.6,509.4 945.1,513.7" fill="#eceef8" stroke="none" stroke-width="0" stroke-linejoin="round" />
<polygon points="932.7,487.5 953,494.9 945.1,512.6 935.3,535.6 907,547.5 903.1,548.7 830,552.4 834.8,540.9 846.3,539.1 866.9,535.4 888.6,529.4 900.7,522.1 904.9,514.9 897.1,508.2 883.8,504.6 864.4,505.2 852.4,504.6 857.2,493.1" fill="#878ba5" stroke="#0e0e14" stroke-width="1.1" stroke-linejoin="round" />
<linearGradient id="gCut" x1="0" y1="0" x2="1" y2="0"><stop offset="0" stop-color="#a9adc9"/><stop offset=".55" stop-color="#a0a4c0"/><stop offset="1" stop-color="#8488a2"/></linearGradient>
<linearGradient id="gEarT" x1="0" y1="0" x2="1" y2="0"><stop offset="0" stop-color="#9a9eb8"/><stop offset=".55" stop-color="#777b92"/><stop offset="1" stop-color="#8c90a8"/></linearGradient>
<path d="M864.4 505.2 C867.6 505.1 878.3 504.1 883.8 504.6 C889.2 505.1 893.6 506.5 897.1 508.2 C900.6 509.9 904.3 512.6 904.9 514.9 C905.5 517.2 903.4 519.7 900.7 522.1 C898.0 524.5 894.1 527.9 888.6 529.4 C883.1 530.9 871.0 530.9 867.5 531.2 Z" fill="url(#gCut)" stroke="#0e0e14" stroke-width="0.8" stroke-linejoin="round" />
<polygon points="846.3,539.1 853.6,532.8 881.4,531.8 866.9,535.4" fill="#fff" stroke="#15151c" stroke-width="0.7" stroke-linejoin="round" />
<path d="M810.1 503.4 C810.9 501.7 812.7 495.9 814.9 493.1 C817.1 490.3 820.6 488.0 823.4 486.5 C826.2 485.0 829.0 484.3 831.8 484.1 C834.6 483.9 837.7 484.5 840.3 485.3 C842.9 486.1 846.3 488.3 847.5 488.9 L857.2 493.1 L852.4 504.6 L846.3 503 C844.9 502.3 840.9 499.7 837.9 498.8 C834.9 497.9 831.2 497.3 828.2 497.4 C825.2 497.5 822.3 498.1 819.7 499.2 C817.1 500.3 813.7 503.2 812.5 504 Z" fill="url(#gEarT)" stroke="#0e0e14" stroke-width="1.1" stroke-linejoin="round" />
<path d="M847.5 488.9 L844.5 502.2 M849.7 490.5 L847.3 503.5" stroke="#15151c" stroke-width=".8"/>
<path d="M805.2 514.9 C805.8 513.3 806.4 507.9 808.8 505.2 C811.2 502.5 816.5 500.1 819.7 498.8 C822.9 497.5 825.2 497.4 828.2 497.4 C831.2 497.4 834.9 497.9 837.9 498.9 C840.9 499.9 843.9 502.2 846.3 503.2 C848.7 504.2 851.4 504.6 852.4 504.9 L864.4 505.2 L867.5 531.2 L853.6 532.5 L846.3 539.1 C844.5 539.3 838.8 540.8 835.4 540.3 C832.0 539.8 829.0 537.4 825.8 536 C822.6 534.6 819.1 533.3 816.1 531.8 C813.1 530.3 809.5 528.8 807.6 527 C805.7 525.2 805.0 522.9 804.6 520.9 C804.2 518.9 805.1 515.9 805.2 514.9 Z" fill="#a3a7c3" stroke="#0e0e14" stroke-width="1.1" stroke-linejoin="round" />
<ellipse cx="828.8" cy="520.3" rx="9" ry="8.8" fill="url(#gHole)" stroke="#15151c" stroke-width=".9"/>
<path d="M829.6 513.4 l2.4 -1 l3.6 3 l-2 .6 Z" fill="#fff"/>
<path d="M787.1 552.4 C787.9 550.8 789.9 545.5 791.9 542.7 C793.9 539.9 796.4 537.1 799.2 535.4 C802.0 533.7 805.8 532.8 808.8 532.4 C811.8 532.0 814.5 532.1 817.3 533 C820.1 533.9 824.4 537.1 825.8 537.9 L834.8 540.9 L830 552.4 C828.9 552.1 825.9 551.7 823.4 550.7 C820.9 549.7 817.9 547.3 814.9 546.3 C811.9 545.3 808.4 544.8 805.2 544.9 C802.0 545.0 798.3 545.5 795.5 546.9 C792.7 548.2 789.5 552.0 788.3 553 Z" fill="url(#gEarT)" stroke="#0e0e14" stroke-width="1.1" stroke-linejoin="round" />
<path d="M825.8 537.9 L822.1 549.7 M828.8 538.8 L824.8 551.2" stroke="#15151c" stroke-width=".8"/>
<path d="M781.6 564.4 C782.0 562.8 782.8 557.4 784.1 554.8 C785.4 552.2 787.0 550.3 789.5 548.7 C792.0 547.1 796.4 545.7 799.2 545.1 C802.0 544.5 803.8 544.6 806.4 544.9 C809.0 545.1 812.1 545.6 814.9 546.6 C817.7 547.6 820.9 549.9 823.4 550.9 C825.9 551.9 828.9 552.1 830 552.4 L903.1 548.7 L907.4 574.7 L831.8 580.2 C830.4 581.4 826.2 585.5 823.4 587.4 C820.6 589.3 817.9 590.7 814.9 591.6 C811.9 592.5 808.8 593.3 805.2 592.9 C801.6 592.5 796.5 591.3 793.1 589.2 C789.7 587.1 786.7 583.1 784.7 580.2 C782.7 577.3 781.8 574.3 781.3 571.7 C780.8 569.1 781.5 565.6 781.6 564.4 Z" fill="#a3a7c3" stroke="#0e0e14" stroke-width="1.1" stroke-linejoin="round" />
<ellipse cx="805.8" cy="568.7" rx="9" ry="8.8" fill="url(#gHole)" stroke="#15151c" stroke-width=".9"/>
<path d="M806.7 561.8 l2.4 -1 l3.6 3 l-2 .6 Z" fill="#fff"/>
</g>
<path d="M875.5 406.8 h8 M879.5 402.8 v8 M876.7 404 l5.6 5.6 M882.3 404 l-5.6 5.6" stroke="#808080" stroke-width=".7"/>
<path d="M797.6 560.4 h8 M801.6 556.4 v8 M798.8 557.6 l5.6 5.6 M804.4 557.6 l-5.6 5.6" stroke="#a0a0a0" stroke-width=".7"/>
<path d="M760.5 317.8 h8 M764.5 313.8 v8 M761.7 315 l5.6 5.6 M767.3 315 l-5.6 5.6" stroke="#c8c0a0" stroke-width=".7"/>
<text x="788.5" y="266.6" font-family="DejaVu Sans,Liberation Sans,sans-serif" font-weight="200" font-size="19.6" textLength="51.5" lengthAdjust="spacingAndGlyphs" fill="#0000ff">Point1</text>
<path d="M782.9 269.8 h8.6 M787.2 265.5 v8.6" stroke="#0000ff" stroke-width="1"/>
<text x="765.6" y="313.8" font-family="DejaVu Sans,Liberation Sans,sans-serif" font-weight="200" font-size="19.6" textLength="51.5" lengthAdjust="spacingAndGlyphs" fill="#0000ff">Point1</text>
<path d="M760.3 317.6 h8.6 M764.6 313.3 v8.6" stroke="#0000ff" stroke-width="1"/>
<text x="1257.4" y="355.2" font-family="DejaVu Sans,Liberation Sans,sans-serif" font-weight="200" font-size="19.6" textLength="51.5" lengthAdjust="spacingAndGlyphs" fill="#0000ff">Point1</text>
<path d="M1251.8 358.9 h8.6 M1256.1 354.6 v8.6" stroke="#0000ff" stroke-width="1"/>
<text x="1010.4" y="484.4" font-family="DejaVu Sans,Liberation Sans,sans-serif" font-weight="200" font-size="19.6" textLength="51.5" lengthAdjust="spacingAndGlyphs" fill="#0000ff">Point1</text>
<path d="M1005.4 487.8 h8.6 M1009.7 483.5 v8.6" stroke="#0000ff" stroke-width="1"/>
</svg>
<!--ENDMODEL-->
<!-- triad -->
<svg style="left:268px;top:640px" width="70" height="56" viewBox="268 640 70 56"><path d="M283 647 L307 650.4 L307 648.6 L318 653 L307 655.6 L307 653.8 L282.6 649.6 Z" fill="#e00000"/><path d="M309 648.6 L318 653 L309 655.6 Z" fill="#a00000"/><path d="M279.4 650 L282.6 650 L281.6 673 L283.6 673 L279.4 682 L275.6 673 L277.6 673 Z" fill="#0000b0"/><path d="M283 646.4 L284.4 648.6 L279 660 L281 661 L274.8 663.4 L273.2 657.4 L275.4 658.4 L280.6 647.6 Z" fill="#00b000"/><path d="M273.4 657.6 L278.4 655.4 L281 660.6 L275 663.2 Z" fill="#00a000"/><text x="323.2" y="654.8" font-family="DejaVu Sans,Liberation Sans,sans-serif" font-weight="200" font-size="9.6" fill="#ff3030">X</text><text x="275.6" y="688.8" font-family="DejaVu Sans,Liberation Sans,sans-serif" font-weight="200" font-size="9.6" fill="#1010ff">Z</text></svg>
<!--BOTTOM-->
<!-- ===== design study panel ===== -->
<div class="hl" style="left:0;top:717px;width:1917px;background:#8c8c8c;height:2px"></div>
<div class="vl" style="left:0;top:719px;height:289px;background:#8fa3ab;width:3px"></div>
<div class="vl" style="left:3px;top:719px;height:269px;background:#505050"></div>
<div class="vl" style="left:226px;top:719px;height:269px;background:#5a5f96"></div>
<div class="vl" style="left:228px;top:719px;height:269px;background:#2a2a2a;width:1px"></div>
<svg style="left:8px;top:724px" width="17" height="15" viewBox="0 0 17 15"><g fill="#e8e8e8" stroke="#777" stroke-width=".9"><circle cx="3.4" cy="3.4" r="2.4"/><circle cx="10" cy="3.4" r="2.4"/><circle cx="14.6" cy="6" r="1.9"/></g><path d="M3.4 5.8 V13.6 M2 9 H4.8 M10 5.8 V11 M8.6 8 H11.4 M14.6 8 V12 M3.4 3.4 H10" stroke="#777" stroke-width="1.1" fill="none"/></svg>
<div class="t" style="left:27px;top:725.5px;font-size:14.5px;color:#a0a0a0">设计算例 1</div>
<div class="a" style="left:16px;top:739px;width:1px;height:15px;background:repeating-linear-gradient(180deg,#999 0 1px,transparent 1px 2px)"></div>
<div class="a" style="left:16px;top:753px;width:11px;height:1px;background:repeating-linear-gradient(90deg,#999 0 1px,transparent 1px 2px)"></div>
<svg style="left:27px;top:746px" width="16" height="15" viewBox="0 0 16 15"><path d="M.6 13.6 V1.6 H5.6 L6.6 3 H15.4 V13.6 Z" fill="#e4e4e4" stroke="#8a8a8a" stroke-width="1"/><path d="M4.6 5.6 V11.4 H11.4 V8 H8 V5.6 Z" fill="#f4f4f4" stroke="#666" stroke-width="1"/></svg>
<div class="t" style="left:45.5px;top:746.5px;font-size:15px;color:#111">结果和图表</div>
<div class="a" style="left:230px;top:719px;width:1685px;height:27px;background:#d3d3d3"></div>
<div class="a" style="left:318px;top:720px;width:86px;height:27px;background:#f7f7f7"></div>
<div class="vl" style="left:231px;top:721px;height:25px;background:#5a5a5a;width:1px"></div>
<div class="vl" style="left:317px;top:721px;height:25px;background:#5a5a5a;width:1px"></div>
<div class="vl" style="left:403px;top:721px;height:25px;background:#5a5a5a;width:1px"></div>
<div class="vl" style="left:489px;top:721px;height:25px;background:#5a5a5a;width:1px"></div>
<div class="t" style="left:247.5px;top:730px;font-size:14px;color:#bdbdbd">变量视图</div>
<div class="t" style="left:333.5px;top:730px;font-size:14px;color:#222">表格视图</div>
<div class="t" style="left:419.5px;top:730px;font-size:14px;color:#bdbdbd">结果视图</div>
<svg style="left:504px;top:725px" width="18" height="18" viewBox="0 0 17 17"><g transform="translate(8.5 8.5)"><path d="M-1.5 -8 H1.5 L2 -5.9 L3.4 -5.3 L5.2 -6.5 L6.9 -4.7 L5.8 -3 L6.3 -1.7 L8 -1.3 V1.3 L6.3 1.7 L5.8 3 L6.9 4.7 L5.2 6.5 L3.4 5.3 L2 5.9 L1.5 8 H-1.5 L-2 5.9 L-3.4 5.3 L-5.2 6.5 L-6.9 4.7 L-5.8 3 L-6.3 1.7 L-8 1.3 V-1.3 L-6.3 -1.7 L-5.8 -3 L-6.9 -4.7 L-5.2 -6.5 L-3.4 -5.3 L-2 -5.9 Z" fill="#ececec" stroke="#333" stroke-width="1.1" stroke-linejoin="round"/><circle r="2.7" fill="#d3d3d3" stroke="#333" stroke-width="1.1"/></g></svg>
<svg style="left:530px;top:725px" width="19" height="18" viewBox="0 0 19 18"><rect x="2" y=".7" width="14.6" height="16.6" rx="1.6" fill="#fdfdfd" stroke="#222" stroke-width="1.3"/><path d="M5 4.4 H14 M5 7.2 H14 M5 10 H14 M5 12.8 H14" stroke="#222" stroke-width="1.1"/><path d="M.6 4 H3 M.6 7.4 H3 M.6 10.8 H3 M.6 14 H3" stroke="#222" stroke-width="1.4"/><path d="M17.4 3.6 V7 M17.4 8.4 V11.6 M17.4 13 V15.4" stroke="#2d78b0" stroke-width="1.8"/></svg>
<svg style="left:556px;top:724px" width="22" height="20" viewBox="0 0 22 20"><path d="M1 19 V3 H7.6 L9.4 5.4 H13" fill="#f4f4f4" stroke="#333" stroke-width="1.2"/><path d="M1 19 L5.4 9 H21 L16.6 19 Z" fill="#f8f8f8" stroke="#333" stroke-width="1.2"/><path d="M9 1.4 C13 .8 15.6 2.8 15.8 5.8 L18.4 5.8 L14.2 10.8 L10.2 5.8 L12.8 5.8 C12.6 4 11.4 2.6 9 1.4 Z" fill="#1fa83a" stroke="#0e6a1e" stroke-width=".6"/></svg>
<svg style="left:585px;top:725px" width="18" height="18" viewBox="0 0 18 18"><path d="M.7 2 Q.7 .7 2 .7 H16 Q17.3 .7 17.3 2 V16 Q17.3 17.3 16 17.3 H3 L.7 15 Z" fill="#2a6ea6" stroke="#173f66" stroke-width="1.1"/><rect x="3.6" y=".8" width="10.8" height="7.4" fill="#e8e8e8" stroke="#555" stroke-width=".6"/><path d="M5 3 H13 M5 5 H13 M5 6.8 H13" stroke="#555" stroke-width=".8"/><rect x="4.6" y="11" width="8.8" height="6.2" fill="#1a1a1a"/><rect x="9.6" y="12" width="2.6" height="4.4" fill="#d8d8d8"/></svg>
<div class="a" style="left:242px;top:751px;width:40px;height:26px;background:#d3d3d3;border:1px solid #c4c4c4"></div>
<div class="t" style="left:246px;top:755.5px;font-size:16px;color:#b2b2b2">运行</div>
<div class="a" style="left:291px;top:757px;width:16px;height:16px;background:#fff;border:1.4px solid #333"></div>
<div class="t" style="left:310.5px;top:756.5px;font-size:16px;color:#111;letter-spacing:-.6px">优化</div>
<div class="t" style="left:801px;top:752px;font-size:15px;color:#222">总活动情形:</div>
<div class="t" style="left:891.5px;top:754px;font-size:12.5px;color:#222">4</div>
<div class="a" style="left:240px;top:790px;width:352px;height:40px;background:#f7f7f7;border-top:1px solid #ededed;border-left:1px solid #ededed"></div>
<div class="a" style="left:593px;top:791px;width:70px;height:122px;background:#d3d3d3"></div>
<div class="a" style="left:663px;top:791px;width:69px;height:122px;background:#f7f7f7"></div>
<div class="a" style="left:732px;top:791px;width:69px;height:122px;background:#d3d3d3"></div>
<div class="a" style="left:801px;top:791px;width:69px;height:122px;background:#f7f7f7"></div>
<div class="a" style="left:870px;top:791px;width:60px;height:122px;background:#d3d3d3"></div>
<div class="t" style="left:594px;top:799px;width:69px;text-align:center;font-size:12px;font-weight:bold;color:#111">情形 1</div>
<div class="t" style="left:663px;top:799px;width:69px;text-align:center;font-size:12px;font-weight:bold;color:#111">情形 2</div>
<div class="t" style="left:732px;top:799px;width:69px;text-align:center;font-size:12px;font-weight:bold;color:#111">情形 3</div>
<div class="t" style="left:801px;top:799px;width:69px;text-align:center;font-size:12px;font-weight:bold;color:#111">情形 4</div>
<div class="t" style="left:871px;top:798px;width:61px;text-align:center;font-size:12px;font-weight:bold;color:#111">情形 5</div>
<div class="hl" style="left:593px;top:791px;width:337px;background:#c0c0c0"></div>
<div class="hl" style="left:593px;top:811px;width:276px;background:#333"></div>
<div class="hl" style="left:869px;top:810px;width:61px;background:#222;height:2px"></div>
<div class="vl" style="left:662px;top:791px;height:40px;background:#222"></div>
<div class="vl" style="left:731px;top:791px;height:40px;background:#222"></div>
<div class="vl" style="left:800px;top:791px;height:40px;background:#222"></div>
<div class="vl" style="left:869px;top:791px;height:40px;background:#222"></div>
<div class="vl" style="left:929px;top:791px;height:40px;background:#222"></div>
<svg style="left:622px;top:817px" width="13" height="13" viewBox="0 0 13 13"><rect x=".6" y=".6" width="11.8" height="11.8" fill="#fff" stroke="#555" stroke-width="1.1"/><path d="M2.4 6 L4.8 8.6 L9.6 2.6" fill="none" stroke="#333" stroke-width="1.1"/></svg>
<svg style="left:690px;top:817px" width="13" height="13" viewBox="0 0 13 13"><rect x=".6" y=".6" width="11.8" height="11.8" fill="#fff" stroke="#555" stroke-width="1.1"/><path d="M2.4 6 L4.8 8.6 L9.6 2.6" fill="none" stroke="#333" stroke-width="1.1"/></svg>
<svg style="left:760px;top:817px" width="13" height="13" viewBox="0 0 13 13"><rect x=".6" y=".6" width="11.8" height="11.8" fill="#fff" stroke="#555" stroke-width="1.1"/><path d="M2.4 6 L4.8 8.6 L9.6 2.6" fill="none" stroke="#333" stroke-width="1.1"/></svg>
<svg style="left:828px;top:817px" width="13" height="13" viewBox="0 0 13 13"><rect x=".6" y=".6" width="11.8" height="11.8" fill="#fff" stroke="#555" stroke-width="1.1"/><path d="M2.4 6 L4.8 8.6 L9.6 2.6" fill="none" stroke="#333" stroke-width="1.1"/></svg>
<svg style="left:893px;top:817px" width="13" height="13" viewBox="0 0 13 13"><rect x=".6" y=".6" width="11.8" height="11.8" fill="#fff" stroke="#555" stroke-width="1.1"/></svg>
<div class="a" style="left:240px;top:829.5px;width:690px;height:2.6px;background:#0a0a0a"></div>
<div class="a" style="left:591px;top:790px;width:3px;height:185px;background:#0a0a0a"></div>
<div class="a" style="left:242px;top:841px;width:15px;height:15px;background:#f2f2f2;border:1px solid #9a9a9a;border-radius:2px;box-shadow:inset -1px -1px 0 #d0d0d0"></div>
<div class="a" style="left:245px;top:847px;width:9px;height:2px;background:#3a4a9a"></div>
<div class="t" style="left:258px;top:843.5px;font-size:11.5px;font-weight:500;color:#000;letter-spacing:-.4px">变量</div>
<div class="a" style="left:242px;top:960px;width:15px;height:15px;background:#f2f2f2;border:1px solid #9a9a9a;border-radius:2px;box-shadow:inset -1px -1px 0 #d0d0d0"></div>
<div class="a" style="left:245px;top:966px;width:9px;height:2px;background:#3a4a9a"></div>
<div class="t" style="left:258px;top:962.5px;font-size:11.5px;font-weight:500;color:#000;letter-spacing:-.4px">约束</div>
<div class="hl" style="left:240px;top:856px;width:352px;background:#222"></div>
<div class="hl" style="left:593px;top:856px;width:337px;background:#b8b8b8"></div>
<div class="hl" style="left:281px;top:884px;width:649px;background:#8a8a8a"></div>
<div class="hl" style="left:281px;top:912px;width:649px;background:#8a8a8a"></div>
<div class="vl" style="left:662px;top:857px;height:56px;background:#8a8a8a"></div>
<div class="vl" style="left:731px;top:857px;height:56px;background:#8a8a8a"></div>
<div class="vl" style="left:800px;top:857px;height:56px;background:#8a8a8a"></div>
<div class="vl" style="left:869px;top:857px;height:56px;background:#8a8a8a"></div>
<div class="vl" style="left:929px;top:857px;height:56px;background:#8a8a8a"></div>
<div class="a" style="left:281px;top:857px;width:121px;height:75px;border:1px solid #7a7a7a;border-top:none;border-right:2px solid #8a8a8a"></div>
<div class="vl" style="left:299px;top:857px;height:56px;background:#8a8a8a"></div>
<div class="t" style="left:284.5px;top:868.5px;font-size:13px;color:#111">L</div>
<div class="t" style="left:283.5px;top:896.5px;font-size:13px;color:#111">V</div>
<div class="t" style="left:304px;top:871px;font-size:11.5px;font-weight:500;color:#000;letter-spacing:-.3px">输入数值</div>
<div class="t" style="left:304px;top:899px;font-size:11.5px;font-weight:500;color:#000;letter-spacing:-.3px">输入数值</div>
<div class="a" style="left:386px;top:862px;width:14px;height:22px;background:#ececec;border:1px solid #a8a8a8;border-radius:2px"></div>
<svg style="left:388px;top:872px" width="10" height="7" viewBox="0 0 10 7"><path d="M1 1 L5 5.4 L9 1" fill="none" stroke="#444" stroke-width="1.1"/></svg>
<div class="a" style="left:386px;top:890px;width:14px;height:22px;background:#ececec;border:1px solid #a8a8a8;border-radius:2px"></div>
<svg style="left:388px;top:900px" width="10" height="7" viewBox="0 0 10 7"><path d="M1 1 L5 5.4 L9 1" fill="none" stroke="#444" stroke-width="1.1"/></svg>
<div class="a" style="left:386px;top:914px;width:14px;height:17px;background:#ececec;border:1px solid #a8a8a8;border-radius:2px"></div>
<svg style="left:388px;top:921.5px" width="10" height="7" viewBox="0 0 10 7"><path d="M1 1 L5 5.4 L9 1" fill="none" stroke="#444" stroke-width="1.1"/></svg>
<div class="t" style="left:286px;top:918px;font-size:11.5px;font-weight:500;font-style:italic;color:#000;letter-spacing:-.4px">单击此处添加 变量</div>
<div class="t" style="left:596.5px;top:869px;font-size:13px;color:#111;letter-spacing:-.3px">0 <span style="font-size:11.5px;font-weight:500;letter-spacing:-.5px">牛顿</span></div>
<div class="t" style="left:665.5px;top:869px;font-size:13px;color:#111;letter-spacing:-.3px">60 <span style="font-size:11.5px;font-weight:500;letter-spacing:-.5px">牛顿</span></div>
<div class="t" style="left:734.5px;top:869px;font-size:13px;color:#111;letter-spacing:-.3px">72 <span style="font-size:11.5px;font-weight:500;letter-spacing:-.5px">牛顿</span></div>
<div class="t" style="left:803.5px;top:869px;font-size:13px;color:#111;letter-spacing:-.3px">115 <span style="font-size:11.5px;font-weight:500;letter-spacing:-.5px">牛顿</span></div>
<div class="t" style="left:596.5px;top:897px;font-size:13px;color:#111;letter-spacing:-.3px">-225 <span style="font-size:11.5px;font-weight:500;letter-spacing:-.5px">牛顿</span></div>
<div class="t" style="left:666px;top:898px;font-size:13px;color:#111;letter-spacing:-.5px">185</div>
<div class="vl" style="left:686px;top:896px;height:13px;background:#111"></div>
<div class="t" style="left:734.5px;top:897px;font-size:13px;color:#111;letter-spacing:-.3px">225 <span style="font-size:11.5px;font-weight:500;letter-spacing:-.5px">牛顿</span></div>
<div class="t" style="left:803.5px;top:897px;font-size:13px;color:#111;letter-spacing:-.3px">225 <span style="font-size:11.5px;font-weight:500;letter-spacing:-.5px">牛顿</span></div>
<div class="a" style="left:717px;top:887px;width:12px;height:11px;background:#f4f4f4;border:1px solid #b4b4b4"></div>
<div class="a" style="left:717px;top:899px;width:12px;height:11px;background:#f4f4f4;border:1px solid #b4b4b4"></div>
<svg style="left:719px;top:889px" width="8" height="6" viewBox="0 0 8 6"><path d="M0 5.4 L4 .6 L8 5.4 Z" fill="#111"/></svg>
<svg style="left:719px;top:902px" width="8" height="6" viewBox="0 0 8 6"><path d="M0 .6 L4 5.4 L8 .6 Z" fill="#111"/></svg>
<div class="a" style="left:1893px;top:791px;width:19px;height:190px;background:#f0f0f0"></div>
<div class="a" style="left:1893px;top:812px;width:19px;height:90px;background:#c9c9c9"></div>
<svg style="left:1896px;top:797px" width="13" height="9" viewBox="0 0 13 9"><path d="M1.2 7.6 L6.5 2 L11.8 7.6" fill="none" stroke="#444" stroke-width="1.6"/></svg>
<div class="vl" style="left:1914px;top:746px;height:241px;background:#9c9c9c"></div>
<div class="vl" style="left:1918px;top:716px;height:292px;background:#0c2c5e;width:2px"></div>
<div class="a" style="left:1729px;top:932px;width:189px;height:45px;border-radius:6px;background:linear-gradient(180deg,#68d856 0%,#52ca40 45%,#36b824 75%,#2cb01a 100%);border:1.5px solid #c8f0be;box-shadow:0 0 2px 1px #9ce08e"></div>
<div class="t" style="left:1737px;top:942.5px;font-size:23px;color:#fff;font-weight:400">中</div>
<svg style="left:1763px;top:944px" width="14" height="22" viewBox="0 0 14 22"><path d="M2.6 2 C5.4 2.4 6 5 3 7.6" stroke="#fff" stroke-width="2.2" stroke-linecap="round" fill="none"/><circle cx="9" cy="14" r="3.2" fill="none" stroke="#fff" stroke-width="1.9"/></svg>
<div class="t" style="left:1781px;top:942.5px;font-size:23px;color:#fff;font-weight:400">简</div>
<svg style="left:1806px;top:948px" width="22" height="16" viewBox="0 0 22 16"><path d="M1 5 L6.6 1 C8.6 3 13.4 3 15.4 1 L21 5 L18.6 8.4 L16.2 7 V15 H5.8 V7 L3.4 8.4 Z" fill="#fff"/></svg>
<svg style="left:1830px;top:947px" width="15" height="16" viewBox="0 0 15 16"><path d="M7.6 .8 C14 2.6 15 11.6 8 14.4 C5.4 15.4 2.6 14.8 .8 13.2 C5.6 13.6 9.8 8.6 7.6 .8 Z" fill="#fff"/></svg>
<svg style="left:1847px;top:945px" width="19" height="19" viewBox="0 0 19 19"><g transform="translate(9.5 9.5)" fill="#fff"><circle r="6"/><g><rect x="-2" y="-9.2" width="4" height="4.6"/><rect x="-2" y="4.6" width="4" height="4.6"/><rect x="-9.2" y="-2" width="4.6" height="4"/><rect x="4.6" y="-2" width="4.6" height="4"/></g><g transform="rotate(45)"><rect x="-2" y="-9.2" width="4" height="4.6"/><rect x="-2" y="4.6" width="4" height="4.6"/><rect x="-9.2" y="-2" width="4.6" height="4"/><rect x="4.6" y="-2" width="4.6" height="4"/></g></g><circle cx="9.5" cy="9.5" r="3.3" fill="#3cbc2a"/></svg>
<svg style="left:1868px;top:933px" width="50" height="44" viewBox="0 0 50 44"><path d="M3 6.4 Q3.4 3.6 6.4 3.2 L40 1 Q46 .8 47.4 6 L49.6 36 Q49.8 42.6 44 42.8 L11 43 Z" fill="#48c236" stroke="#d4f4cc" stroke-width="1.1"/><path d="M43 8 C36 2.6 13.6 5.6 13 14.6 C12.6 22.6 42 17.6 41.6 28 C41.2 37.6 19 38.6 9.4 31.4" fill="none" stroke="#fff" stroke-width="7.4" stroke-linecap="butt"/></svg>
<div class="hl" style="left:230px;top:987px;width:1685px;background:#9a9a9a"></div>
<div class="a" style="left:27px;top:988px;width:80px;height:19px;background:#a9a9c5"></div>
<div class="a" style="left:27px;top:988px;width:20px;height:19px;border:1px solid #8c8cac;border-top-color:#7c7c9c"></div>
<svg style="left:27px;top:991px" width="19" height="13" viewBox="0 0 19 13"><path d="M6.4 2 V11 M12.6 2 L7.6 6.5 L12.6 11 Z" fill="#9090ae" stroke="#8484a4" stroke-width="1.2"/></svg>
<div class="a" style="left:47px;top:988px;width:20px;height:19px;border:1px solid #8c8cac;border-top-color:#7c7c9c"></div>
<svg style="left:47px;top:991px" width="19" height="13" viewBox="0 0 19 13"><path d="M11.6 2 L6 6.5 L11.6 11 Z" fill="#9090ae" stroke="#8484a4" stroke-width="1.2"/></svg>
<div class="a" style="left:67px;top:988px;width:20px;height:19px;border:1px solid #8c8cac;border-top-color:#7c7c9c"></div>
<svg style="left:67px;top:991px" width="19" height="13" viewBox="0 0 19 13"><path d="M7.4 2 L13 6.5 L7.4 11 Z" fill="#9090ae" stroke="#8484a4" stroke-width="1.2"/></svg>
<div class="a" style="left:87px;top:988px;width:20px;height:19px;border:1px solid #8c8cac;border-top-color:#7c7c9c"></div>
<svg style="left:87px;top:991px" width="19" height="13" viewBox="0 0 19 13"><path d="M6.4 2 L11.4 6.5 L6.4 11 Z M12.6 2 V11" fill="#9090ae" stroke="#8484a4" stroke-width="1.2"/></svg>
<div class="a" style="left:107px;top:988px;width:62px;height:20px;background:#d3d3d3;border-right:1px solid #8c8c8c;border-bottom:1px solid #a0a0a0"></div>
<div class="t" style="left:123.5px;top:989.5px;font-size:17px;color:#222;letter-spacing:0px">模型</div>
<div class="a" style="left:169px;top:988px;width:77px;height:20px;background:#d3d3d3;border-right:1px solid #8c8c8c;border-bottom:1px solid #a0a0a0"></div>
<div class="t" style="left:177px;top:989.5px;font-size:17px;color:#222;letter-spacing:-0.5px">3D 视图</div>
<div class="a" style="left:246px;top:988px;width:126px;height:20px;background:#d3d3d3;border-right:1px solid #8c8c8c;border-bottom:1px solid #a0a0a0"></div>
<div class="t" style="left:254.5px;top:990.5px;font-size:16px;color:#222;letter-spacing:-0.12px">Motion Study 1</div>
<div class="a" style="left:372px;top:988px;width:168px;height:20px;background:#d3d3d3;border-right:1px solid #8c8c8c;border-bottom:1px solid #a0a0a0"></div>
<div class="t" style="left:396px;top:990.5px;font-size:16px;color:#222;letter-spacing:-0.03px">partially completed</div>
<div class="a" style="left:540px;top:988px;width:48px;height:20px;background:#d3d3d3;border-right:1px solid #8c8c8c;border-bottom:1px solid #a0a0a0"></div>
<div class="t" style="left:565px;top:990.5px;font-size:16px;color:#222;letter-spacing:0px">M</div>
<div class="a" style="left:588px;top:987px;width:124px;height:21px;background:#f7f7f7;border-right:1px solid #8c8c8c"></div>
<div class="t" style="left:612px;top:989.5px;font-size:17px;color:#111;letter-spacing:-.3px">设计算例 <span style="font-size:15px">1</span></div>
<div class="a" style="left:712px;top:987px;width:1208px;height:21px;border-top:1px solid #9a9a9a;border-bottom:1px solid #9a9a9a"></div>
<svg style="left:380px;top:990px" width="15" height="14" viewBox="0 0 15 14"><path d="M1 1.6 L4.6 6.6 M3.6 1 V5 H7.4 M5.6 2.6 L9.4 8.4 L8.6 4.6" stroke="#333" stroke-width="1.1" fill="none"/><path d="M10.4 6 L14.4 13 H6.4 Z" fill="#f8c800" stroke="#c98a00" stroke-width=".6"/></svg>
<svg style="left:548px;top:990px" width="12" height="13" viewBox="0 0 12 13"><path d="M1 1.6 L4.6 6.6 M3.6 1 V5 H7.4 M6 3 L10 9 L9.4 5 M2 8 L6 12" stroke="#333" stroke-width="1.1" fill="none"/></svg>
<svg style="left:593px;top:989px" width="15" height="13" viewBox="0 0 17 15"><g fill="#e8e8e8" stroke="#333" stroke-width="1"><circle cx="3.4" cy="3.4" r="2.2"/><circle cx="10" cy="3.4" r="2.2"/><circle cx="14.6" cy="6" r="1.8"/></g><path d="M3.4 5.8 V13.6 M2 9 H4.8 M10 5.8 V11 M8.6 8 H11.4 M14.6 8 V12 M3.4 3.4 H10" stroke="#333" stroke-width="1.2" fill="none"/></svg>
<!--STATUS-->
<!-- ===== status bar ===== -->
<div class="hl" style="left:0;top:1008px;width:1920px;background:#a8a8a8"></div>
<div class="t" style="left:1px;top:1013.5px;font-size:15.3px;color:#111">SOLIDWORKS Premium 2020 SP2.0</div>
<div class="t" style="left:1601px;top:1013.5px;font-size:15px;color:#111">欠定义</div>
<svg style="left:1686px;top:1014px" width="9" height="13" viewBox="0 0 9 13"><rect x=".4" y=".4" width="8.2" height="12.2" rx="2.4" fill="#3a3a3a"/><circle cx="4.5" cy="3.8" r="1.9" fill="#e0201a"/><circle cx="4.5" cy="9.2" r="1.9" fill="#2aa02c"/></svg>
<div class="t" style="left:1801px;top:1013.5px;font-size:15px;color:#111">自定义</div>
<svg style="left:1868px;top:1018px" width="7" height="5" viewBox="0 0 7 5"><path d="M0 4.6 L3.5 .4 L7 4.6 Z" fill="#222"/></svg>
<svg style="left:1900px;top:1012px" width="18" height="15" viewBox="0 0 18 15"><path d="M1 5 L10 1 L17 5.4 V9 L8.4 14 L1 8.6 Z" fill="#f0f0f0" stroke="#333" stroke-width="1"/><path d="M1 5 L8.4 10 L17 5.4 M8.4 10 V14" fill="none" stroke="#333" stroke-width=".9"/><ellipse cx="9" cy="5.4" rx="3.2" ry="1.6" fill="none" stroke="#333" stroke-width=".9"/></svg>
<div class="a" style="left:0;top:1029.5px;width:1920px;height:4.5px;background:#0c0c0c"></div>
<div class="a" style="left:186px;top:1029.5px;width:124px;height:4.5px;background:#262626"></div>
</div>
</body>
</html>
